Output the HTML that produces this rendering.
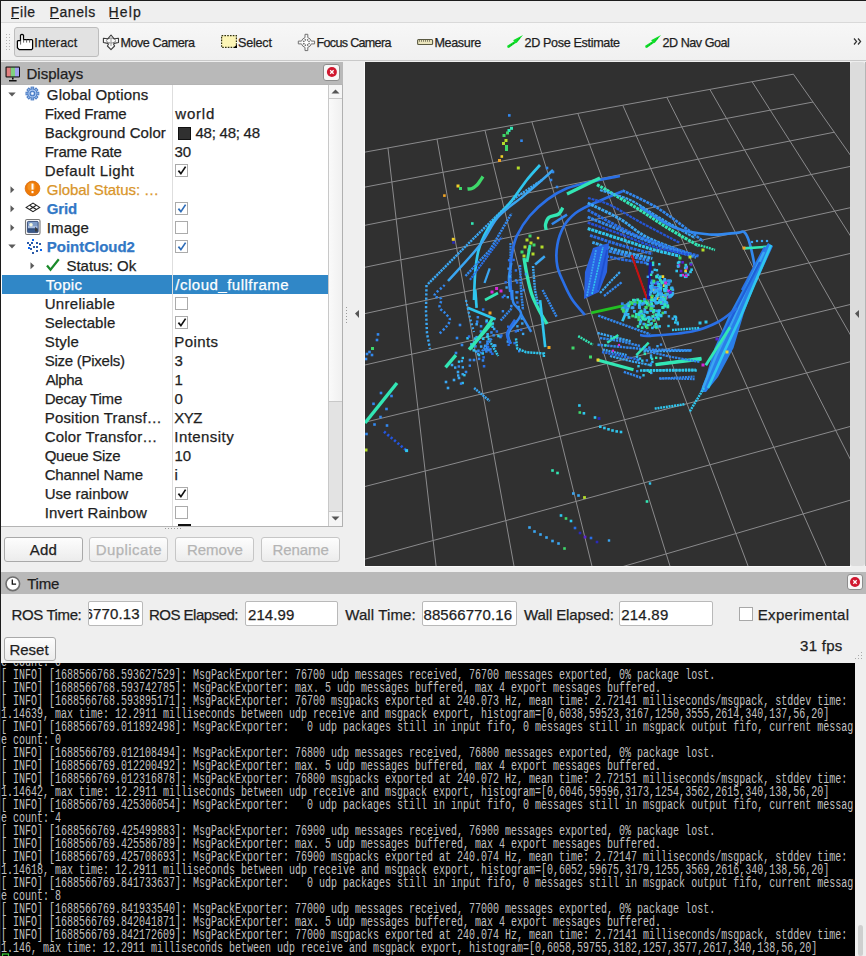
<!DOCTYPE html>
<html><head><meta charset="utf-8"><style>
html,body{margin:0;padding:0;}
body{width:866px;height:956px;position:relative;overflow:hidden;background:#efefef;font-family:"Liberation Sans",sans-serif;}
</style></head><body>
<div style="position:absolute;left:0px;top:0px;width:866px;height:1px;background:#1c1c1c;"></div>
<div style="position:absolute;left:0px;top:0px;width:1px;height:956px;background:#1c1c1c;"></div>
<div style="position:absolute;left:1px;top:1px;width:865px;height:21px;background:#efefef;"></div>
<div style="position:absolute;left:1px;top:22px;width:865px;height:1px;background:#d9d9d9;"></div>
<div style="position:absolute;left:10.80px;top:4.95px;font-size:14px;line-height:14px;color:#1e1e1e;white-space:pre;letter-spacing:0.600px;font-weight:normal;-webkit-text-stroke:0.25px #1e1e1e;">File</div>
<div style="position:absolute;left:11.3px;top:17.6px;width:7.4px;height:1.6px;background:#111;"></div>
<div style="position:absolute;left:49.60px;top:4.95px;font-size:14px;line-height:14px;color:#1e1e1e;white-space:pre;letter-spacing:0.560px;font-weight:normal;-webkit-text-stroke:0.25px #1e1e1e;">Panels</div>
<div style="position:absolute;left:50.2px;top:17.6px;width:8.7px;height:1.6px;background:#111;"></div>
<div style="position:absolute;left:108.50px;top:4.95px;font-size:14px;line-height:14px;color:#1e1e1e;white-space:pre;letter-spacing:1.167px;font-weight:normal;-webkit-text-stroke:0.25px #1e1e1e;">Help</div>
<div style="position:absolute;left:109.5px;top:17.6px;width:9.2px;height:1.6px;background:#111;"></div>
<div style="position:absolute;left:1px;top:23px;width:865px;height:37px;background:linear-gradient(#f7f7f7,#f0f0f0);"></div>
<div style="position:absolute;left:1px;top:60px;width:865px;height:1px;background:#c9c9c9;"></div>
<div style="position:absolute;left:6px;top:34px;width:1px;height:1px;background:#b5b5b5;"></div>
<div style="position:absolute;left:6px;top:37px;width:1px;height:1px;background:#b5b5b5;"></div>
<div style="position:absolute;left:6px;top:40px;width:1px;height:1px;background:#b5b5b5;"></div>
<div style="position:absolute;left:6px;top:43px;width:1px;height:1px;background:#b5b5b5;"></div>
<div style="position:absolute;left:6px;top:46px;width:1px;height:1px;background:#b5b5b5;"></div>
<div style="position:absolute;left:6px;top:49px;width:1px;height:1px;background:#b5b5b5;"></div>
<div style="position:absolute;left:9px;top:34px;width:1px;height:1px;background:#b5b5b5;"></div>
<div style="position:absolute;left:9px;top:37px;width:1px;height:1px;background:#b5b5b5;"></div>
<div style="position:absolute;left:9px;top:40px;width:1px;height:1px;background:#b5b5b5;"></div>
<div style="position:absolute;left:9px;top:43px;width:1px;height:1px;background:#b5b5b5;"></div>
<div style="position:absolute;left:9px;top:46px;width:1px;height:1px;background:#b5b5b5;"></div>
<div style="position:absolute;left:9px;top:49px;width:1px;height:1px;background:#b5b5b5;"></div>
<div style="position:absolute;left:14px;top:27px;width:83px;height:28px;background:#e2e2e2;border:1px solid #bdbdbd;border-radius:3px"></div>
<div style="position:absolute;left:34.30px;top:36.73px;font-size:12.6px;line-height:12.6px;color:#1e1e1e;white-space:pre;letter-spacing:0.129px;font-weight:normal;-webkit-text-stroke:0.25px #1e1e1e;">Interact</div>
<div style="position:absolute;left:120.40px;top:36.73px;font-size:12.6px;line-height:12.6px;color:#1e1e1e;white-space:pre;letter-spacing:-0.440px;font-weight:normal;-webkit-text-stroke:0.25px #1e1e1e;">Move Camera</div>
<div style="position:absolute;left:238.00px;top:36.73px;font-size:12.6px;line-height:12.6px;color:#1e1e1e;white-space:pre;letter-spacing:-0.220px;font-weight:normal;-webkit-text-stroke:0.25px #1e1e1e;">Select</div>
<div style="position:absolute;left:316.60px;top:36.73px;font-size:12.6px;line-height:12.6px;color:#1e1e1e;white-space:pre;letter-spacing:-0.709px;font-weight:normal;-webkit-text-stroke:0.25px #1e1e1e;">Focus Camera</div>
<div style="position:absolute;left:434.50px;top:36.73px;font-size:12.6px;line-height:12.6px;color:#1e1e1e;white-space:pre;letter-spacing:-0.383px;font-weight:normal;-webkit-text-stroke:0.25px #1e1e1e;">Measure</div>
<div style="position:absolute;left:524.50px;top:36.73px;font-size:12.6px;line-height:12.6px;color:#1e1e1e;white-space:pre;letter-spacing:-0.347px;font-weight:normal;-webkit-text-stroke:0.25px #1e1e1e;">2D Pose Estimate</div>
<div style="position:absolute;left:662.50px;top:36.73px;font-size:12.6px;line-height:12.6px;color:#1e1e1e;white-space:pre;letter-spacing:-0.480px;font-weight:normal;-webkit-text-stroke:0.25px #1e1e1e;">2D Nav Goal</div>
<svg style="position:absolute;left:14px;top:30px" width="24" height="24"><path d="M6.5 10.5V5.2Q8 3.6 9.5 5.2V9.5H17.8Q18.6 9.8 18.6 10.6V18.6L17.6 19.6H5.2L3.4 17.8V11.2L4.2 10.5Z" fill="#fff" stroke="#000" stroke-width="1.25" stroke-linejoin="round"/><path d="M6.6 10.6V14.6M9.6 9.6V12.6M12.6 9.6V12.6M15.6 9.6V12.6" stroke="#555" stroke-width="0.9"/></svg>
<svg style="position:absolute;left:100px;top:30px" width="24" height="24"><path d="M11 5L14.2 8.8L18.5 8.3V12.5L14.2 13.4L13.6 14.2L14.6 16L11 19.6L7.4 16L8.4 14.2L7.8 13.4L3.4 12.5V8.3L7.8 8.8Z" fill="#fafafa" stroke="#3c3c3c" stroke-width="1.1" stroke-linejoin="round"/><ellipse cx="11" cy="10.6" rx="4.6" ry="2.4" fill="none" stroke="#333" stroke-width="1" stroke-dasharray="1.2 0.8"/><path d="M11 7.5V16" stroke="#aaa" stroke-width="1.2"/></svg>
<svg style="position:absolute;left:218px;top:30px" width="24" height="24"><rect x="3.6" y="5.6" width="14.8" height="11.8" fill="#fcf5b6" stroke="#303010" stroke-width="1.2" stroke-dasharray="1.6 1.2"/><path d="M15.5 18H19V14.2Z" fill="#000"/></svg>
<svg style="position:absolute;left:295px;top:30px" width="24" height="24"><path d="M10 4.3H12.8V7.6A5.2 5.2 0 0 1 16.3 11.1H19.6V13.9H16.3A5.2 5.2 0 0 1 12.8 17.4V20.6H10V17.4A5.2 5.2 0 0 1 6.5 13.9H3.3V11.1H6.5A5.2 5.2 0 0 1 10 7.6Z" fill="#f8f8f8" stroke="#707070" stroke-width="1"/><circle cx="11.4" cy="12.5" r="2.8" fill="none" stroke="#666" stroke-width="1.4" stroke-dasharray="1.5 0.7"/><path d="M11.4 8V17M7 12.5H16" stroke="#fff" stroke-width="0.8"/></svg>
<svg style="position:absolute;left:412px;top:30px" width="24" height="24"><rect x="5.6" y="9.5" width="15" height="5" rx="1" fill="#ebe5bd" stroke="#5b5a42" stroke-width="1.1"/><path d="M7.5 10V11.8M9.5 10V11.8M11.5 10V11.8M13.5 10V11.8M15.5 10V11.8M17.5 10V11.8" stroke="#6a6850" stroke-width="0.8"/></svg>
<svg style="position:absolute;left:503px;top:30px" width="24" height="24"><path d="M20 5L13.9 12.8L12.4 13.2L5.8 17.9L4.4 17.6L4.2 15.8L11.3 11.2L10 10.3Z" fill="#10e02a"/><path d="M17 8.2L13.6 11.2M10.8 13.2L6 16.6" stroke="#0a8a1a" stroke-width="0.9" stroke-dasharray="1 1.2"/></svg>
<svg style="position:absolute;left:641px;top:30px" width="24" height="24"><path d="M20 5L13.9 12.8L12.4 13.2L5.8 17.9L4.4 17.6L4.2 15.8L11.3 11.2L10 10.3Z" fill="#10e02a"/><path d="M17 8.2L13.6 11.2M10.8 13.2L6 16.6" stroke="#0a8a1a" stroke-width="0.9" stroke-dasharray="1 1.2"/></svg>
<svg style="position:absolute;left:852px;top:36px" width="12" height="12"><path d="M2 2.5L4.6 5.5L2 8.5M6 2.5L8.6 5.5L6 8.5" fill="none" stroke="#333" stroke-width="1.2"/></svg>
<div style="position:absolute;left:1px;top:62px;width:342px;height:22px;background:#b9b9b9;"></div>
<svg style="position:absolute;left:4px;top:64px" width="20" height="20"><rect x="1.5" y="2.5" width="14.5" height="11" rx="1" fill="#111"/><rect x="2.6" y="3.6" width="4.2" height="8.8" fill="#e08080"/><rect x="6.8" y="3.6" width="4.2" height="8.8" fill="#80d080"/><rect x="11" y="3.6" width="4" height="8.8" fill="#a0a0f0"/><path d="M8.8 13.5V15.5M5 16.8H12.6" stroke="#111" stroke-width="1.6"/></svg>
<div style="position:absolute;left:26.50px;top:66.00px;font-size:15px;line-height:15px;color:#1e1e1e;white-space:pre;letter-spacing:0.014px;font-weight:normal;-webkit-text-stroke:0.25px #1e1e1e;">Displays</div>
<div style="position:absolute;left:323px;top:64px;width:15px;height:15px;background:#f7f7f7;border:1px solid #8d8d8d;border-radius:3px"></div>
<svg style="position:absolute;left:323px;top:64px" width="17" height="17"><circle cx="8.9" cy="8" r="5" fill="#d0172f"/><path d="M7.2 6.3l3.4 3.4M10.6 6.3l-3.4 3.4" stroke="#fff" stroke-width="1.3"/></svg>
<div style="position:absolute;left:1px;top:84px;width:342px;height:443px;background:#fff;border-top:1px solid #b4b4b4;border-bottom:1px solid #b4b4b4;box-sizing:border-box"></div>
<div style="position:absolute;left:2px;top:275px;width:326px;height:19px;background:#3087c7;"></div>
<div style="position:absolute;left:172px;top:85px;width:1px;height:441px;background:#dedede;"></div>
<div style="position:absolute;left:46.80px;top:86.90px;font-size:15px;line-height:15px;color:#1e1e1e;white-space:pre;letter-spacing:0.169px;font-weight:normal;-webkit-text-stroke:0.25px #1e1e1e;">Global Options</div>
<div style="position:absolute;left:44.70px;top:105.90px;font-size:15px;line-height:15px;color:#1e1e1e;white-space:pre;letter-spacing:-0.220px;font-weight:normal;-webkit-text-stroke:0.25px #1e1e1e;">Fixed Frame</div>
<div style="position:absolute;left:175.30px;top:105.90px;font-size:15px;line-height:15px;color:#1e1e1e;white-space:pre;letter-spacing:0.800px;font-weight:normal;-webkit-text-stroke:0.25px #1e1e1e;">world</div>
<div style="position:absolute;left:44.70px;top:124.90px;font-size:15px;line-height:15px;color:#1e1e1e;white-space:pre;letter-spacing:0.073px;font-weight:normal;-webkit-text-stroke:0.25px #1e1e1e;">Background Color</div>
<div style="position:absolute;left:178px;top:127px;width:11px;height:11px;background:#303030;border:1px solid #111"></div>
<div style="position:absolute;left:195.50px;top:124.90px;font-size:15px;line-height:15px;color:#1e1e1e;white-space:pre;letter-spacing:-0.244px;font-weight:normal;-webkit-text-stroke:0.25px #1e1e1e;">48; 48; 48</div>
<div style="position:absolute;left:44.70px;top:143.90px;font-size:15px;line-height:15px;color:#1e1e1e;white-space:pre;letter-spacing:-0.233px;font-weight:normal;-webkit-text-stroke:0.25px #1e1e1e;">Frame Rate</div>
<div style="position:absolute;left:174.50px;top:143.90px;font-size:15px;line-height:15px;color:#1e1e1e;white-space:pre;letter-spacing:0.000px;font-weight:normal;-webkit-text-stroke:0.25px #1e1e1e;">30</div>
<div style="position:absolute;left:44.70px;top:162.90px;font-size:15px;line-height:15px;color:#1e1e1e;white-space:pre;letter-spacing:0.425px;font-weight:normal;-webkit-text-stroke:0.25px #1e1e1e;">Default Light</div>
<div style="position:absolute;left:175px;top:164px;width:11px;height:11px;background:#fff;border:1px solid #ababab"></div>
<svg style="position:absolute;left:175px;top:163px" width="14" height="14"><path d="M3.4 7.6L5.9 10.6L10.6 3.6" fill="none" stroke="#111" stroke-width="1.7"/></svg>
<div style="position:absolute;left:46.80px;top:181.90px;font-size:15px;line-height:15px;color:#d9952a;white-space:pre;letter-spacing:-0.073px;font-weight:normal;-webkit-text-stroke:0.25px #d9952a;">Global Status: …</div>
<div style="position:absolute;left:46.80px;top:200.90px;font-size:15px;line-height:15px;color:#3278c6;white-space:pre;letter-spacing:-0.133px;font-weight:bold;-webkit-text-stroke:0.25px #3278c6;">Grid</div>
<div style="position:absolute;left:175px;top:202px;width:11px;height:11px;background:#fff;border:1px solid #ababab"></div>
<svg style="position:absolute;left:175px;top:201px" width="14" height="14"><path d="M3.4 7.6L5.9 10.6L10.6 3.6" fill="none" stroke="#2f6db8" stroke-width="1.7"/></svg>
<div style="position:absolute;left:46.80px;top:219.90px;font-size:15px;line-height:15px;color:#1e1e1e;white-space:pre;letter-spacing:0.100px;font-weight:normal;-webkit-text-stroke:0.25px #1e1e1e;">Image</div>
<div style="position:absolute;left:175px;top:221px;width:11px;height:11px;background:#fff;border:1px solid #ababab"></div>
<div style="position:absolute;left:46.80px;top:238.90px;font-size:15px;line-height:15px;color:#3278c6;white-space:pre;letter-spacing:-0.020px;font-weight:bold;-webkit-text-stroke:0.25px #3278c6;">PointCloud2</div>
<div style="position:absolute;left:175px;top:240px;width:11px;height:11px;background:#fff;border:1px solid #ababab"></div>
<svg style="position:absolute;left:175px;top:239px" width="14" height="14"><path d="M3.4 7.6L5.9 10.6L10.6 3.6" fill="none" stroke="#2f6db8" stroke-width="1.7"/></svg>
<div style="position:absolute;left:66.50px;top:257.90px;font-size:15px;line-height:15px;color:#1e1e1e;white-space:pre;letter-spacing:-0.033px;font-weight:normal;-webkit-text-stroke:0.25px #1e1e1e;">Status: Ok</div>
<div style="position:absolute;left:45.80px;top:276.90px;font-size:15px;line-height:15px;color:#ffffff;white-space:pre;letter-spacing:0.275px;font-weight:normal;-webkit-text-stroke:0.25px #ffffff;">Topic</div>
<div style="position:absolute;left:175.30px;top:276.90px;font-size:15px;line-height:15px;color:#fff;white-space:pre;letter-spacing:0.500px;font-weight:normal;-webkit-text-stroke:0.25px #fff;">/cloud_fullframe</div>
<div style="position:absolute;left:44.70px;top:295.90px;font-size:15px;line-height:15px;color:#1e1e1e;white-space:pre;letter-spacing:0.300px;font-weight:normal;-webkit-text-stroke:0.25px #1e1e1e;">Unreliable</div>
<div style="position:absolute;left:175px;top:297px;width:11px;height:11px;background:#fff;border:1px solid #ababab"></div>
<div style="position:absolute;left:44.70px;top:314.90px;font-size:15px;line-height:15px;color:#1e1e1e;white-space:pre;letter-spacing:0.056px;font-weight:normal;-webkit-text-stroke:0.25px #1e1e1e;">Selectable</div>
<div style="position:absolute;left:175px;top:316px;width:11px;height:11px;background:#fff;border:1px solid #ababab"></div>
<svg style="position:absolute;left:175px;top:315px" width="14" height="14"><path d="M3.4 7.6L5.9 10.6L10.6 3.6" fill="none" stroke="#111" stroke-width="1.7"/></svg>
<div style="position:absolute;left:44.70px;top:333.90px;font-size:15px;line-height:15px;color:#1e1e1e;white-space:pre;letter-spacing:0.200px;font-weight:normal;-webkit-text-stroke:0.25px #1e1e1e;">Style</div>
<div style="position:absolute;left:174.30px;top:333.90px;font-size:15px;line-height:15px;color:#1e1e1e;white-space:pre;letter-spacing:0.400px;font-weight:normal;-webkit-text-stroke:0.25px #1e1e1e;">Points</div>
<div style="position:absolute;left:44.70px;top:352.90px;font-size:15px;line-height:15px;color:#1e1e1e;white-space:pre;letter-spacing:-0.258px;font-weight:normal;-webkit-text-stroke:0.25px #1e1e1e;">Size (Pixels)</div>
<div style="position:absolute;left:174.50px;top:352.90px;font-size:15px;line-height:15px;color:#1e1e1e;white-space:pre;letter-spacing:0.000px;font-weight:normal;-webkit-text-stroke:0.25px #1e1e1e;">3</div>
<div style="position:absolute;left:45.70px;top:371.90px;font-size:15px;line-height:15px;color:#1e1e1e;white-space:pre;letter-spacing:-0.350px;font-weight:normal;-webkit-text-stroke:0.25px #1e1e1e;">Alpha</div>
<div style="position:absolute;left:174.50px;top:371.90px;font-size:15px;line-height:15px;color:#1e1e1e;white-space:pre;letter-spacing:0.000px;font-weight:normal;-webkit-text-stroke:0.25px #1e1e1e;">1</div>
<div style="position:absolute;left:44.70px;top:390.90px;font-size:15px;line-height:15px;color:#1e1e1e;white-space:pre;letter-spacing:-0.178px;font-weight:normal;-webkit-text-stroke:0.25px #1e1e1e;">Decay Time</div>
<div style="position:absolute;left:174.50px;top:390.90px;font-size:15px;line-height:15px;color:#1e1e1e;white-space:pre;letter-spacing:0.000px;font-weight:normal;-webkit-text-stroke:0.25px #1e1e1e;">0</div>
<div style="position:absolute;left:44.70px;top:409.90px;font-size:15px;line-height:15px;color:#1e1e1e;white-space:pre;letter-spacing:0.193px;font-weight:normal;-webkit-text-stroke:0.25px #1e1e1e;">Position Transf…</div>
<div style="position:absolute;left:174.30px;top:409.90px;font-size:15px;line-height:15px;color:#1e1e1e;white-space:pre;letter-spacing:-0.500px;font-weight:normal;-webkit-text-stroke:0.25px #1e1e1e;">XYZ</div>
<div style="position:absolute;left:44.70px;top:428.90px;font-size:15px;line-height:15px;color:#1e1e1e;white-space:pre;letter-spacing:0.186px;font-weight:normal;-webkit-text-stroke:0.25px #1e1e1e;">Color Transfor…</div>
<div style="position:absolute;left:174.30px;top:428.90px;font-size:15px;line-height:15px;color:#1e1e1e;white-space:pre;letter-spacing:0.438px;font-weight:normal;-webkit-text-stroke:0.25px #1e1e1e;">Intensity</div>
<div style="position:absolute;left:44.70px;top:447.90px;font-size:15px;line-height:15px;color:#1e1e1e;white-space:pre;letter-spacing:-0.267px;font-weight:normal;-webkit-text-stroke:0.25px #1e1e1e;">Queue Size</div>
<div style="position:absolute;left:174.50px;top:447.90px;font-size:15px;line-height:15px;color:#1e1e1e;white-space:pre;letter-spacing:0.000px;font-weight:normal;-webkit-text-stroke:0.25px #1e1e1e;">10</div>
<div style="position:absolute;left:44.70px;top:466.90px;font-size:15px;line-height:15px;color:#1e1e1e;white-space:pre;letter-spacing:-0.155px;font-weight:normal;-webkit-text-stroke:0.25px #1e1e1e;">Channel Name</div>
<div style="position:absolute;left:174.50px;top:466.90px;font-size:15px;line-height:15px;color:#1e1e1e;white-space:pre;letter-spacing:0.000px;font-weight:normal;-webkit-text-stroke:0.25px #1e1e1e;">i</div>
<div style="position:absolute;left:44.70px;top:485.90px;font-size:15px;line-height:15px;color:#1e1e1e;white-space:pre;letter-spacing:-0.010px;font-weight:normal;-webkit-text-stroke:0.25px #1e1e1e;">Use rainbow</div>
<div style="position:absolute;left:175px;top:487px;width:11px;height:11px;background:#fff;border:1px solid #ababab"></div>
<svg style="position:absolute;left:175px;top:486px" width="14" height="14"><path d="M3.4 7.6L5.9 10.6L10.6 3.6" fill="none" stroke="#111" stroke-width="1.7"/></svg>
<div style="position:absolute;left:44.70px;top:504.90px;font-size:15px;line-height:15px;color:#1e1e1e;white-space:pre;letter-spacing:0.154px;font-weight:normal;-webkit-text-stroke:0.25px #1e1e1e;">Invert Rainbow</div>
<div style="position:absolute;left:175px;top:506px;width:11px;height:11px;background:#fff;border:1px solid #ababab"></div>
<div style="position:absolute;left:178px;top:524px;width:13px;height:2px;background:#111;"></div>
<div style="position:absolute;left:165px;top:528px;width:1px;height:1px;background:#9a9a9a;"></div>
<div style="position:absolute;left:168px;top:528px;width:1px;height:1px;background:#9a9a9a;"></div>
<div style="position:absolute;left:171px;top:528px;width:1px;height:1px;background:#9a9a9a;"></div>
<div style="position:absolute;left:174px;top:528px;width:1px;height:1px;background:#9a9a9a;"></div>
<div style="position:absolute;left:177px;top:528px;width:1px;height:1px;background:#9a9a9a;"></div>
<div style="position:absolute;left:180px;top:528px;width:1px;height:1px;background:#9a9a9a;"></div>
<svg style="position:absolute;left:8px;top:92px" width="10" height="6"><path d="M0.3 0.5H7.7L4 4.6Z" fill="#5a5a5a"/></svg>
<svg style="position:absolute;left:10px;top:185.5px" width="6" height="10"><path d="M0.5 0.3V7.3L4.3 3.8Z" fill="#5a5a5a"/></svg>
<svg style="position:absolute;left:10px;top:205px" width="6" height="10"><path d="M0.5 0.3V7.3L4.3 3.8Z" fill="#5a5a5a"/></svg>
<svg style="position:absolute;left:10px;top:224px" width="6" height="10"><path d="M0.5 0.3V7.3L4.3 3.8Z" fill="#5a5a5a"/></svg>
<svg style="position:absolute;left:8px;top:244px" width="10" height="6"><path d="M0.3 0.5H7.7L4 4.6Z" fill="#5a5a5a"/></svg>
<svg style="position:absolute;left:30px;top:262px" width="6" height="10"><path d="M0.5 0.3V7.3L4.3 3.8Z" fill="#5a5a5a"/></svg>
<svg style="position:absolute;left:25px;top:86px" width="16" height="16"><g transform="translate(7.4,7.5)" fill="#a9c6f0" stroke="#4a7cc4" stroke-width="1"><rect x="-1.3" y="-6.4" width="2.6" height="3" transform="rotate(0)"/><rect x="-1.3" y="-6.4" width="2.6" height="3" transform="rotate(45)"/><rect x="-1.3" y="-6.4" width="2.6" height="3" transform="rotate(90)"/><rect x="-1.3" y="-6.4" width="2.6" height="3" transform="rotate(135)"/><rect x="-1.3" y="-6.4" width="2.6" height="3" transform="rotate(180)"/><rect x="-1.3" y="-6.4" width="2.6" height="3" transform="rotate(225)"/><rect x="-1.3" y="-6.4" width="2.6" height="3" transform="rotate(270)"/><rect x="-1.3" y="-6.4" width="2.6" height="3" transform="rotate(315)"/><circle r="4.6"/></g><circle cx="7.4" cy="7.5" r="2.3" fill="none" stroke="#4a7cc4" stroke-width="1.1"/><circle cx="7.4" cy="7.5" r="1" fill="#fff"/></svg>
<svg style="position:absolute;left:24px;top:180px" width="17" height="17"><circle cx="8.5" cy="8.5" r="7.4" fill="#ee7a08" stroke="#d06000" stroke-width="0.6"/><circle cx="7.4" cy="6.8" r="4" fill="#f8a030" opacity="0.6"/><rect x="7.5" y="3.6" width="2" height="6" fill="#fff"/><rect x="7.5" y="11" width="2" height="2.2" fill="#fff"/></svg>
<svg style="position:absolute;left:24px;top:201px" width="18" height="14"><g fill="none" stroke="#222" stroke-width="1.1"><path d="M2.2 6.4L9 2.1L15.7 6.4L9 10.6Z"/><path d="M5.6 4.25L12.35 8.5M12.35 4.25L5.6 8.5"/></g></svg>
<svg style="position:absolute;left:24px;top:218px" width="18" height="18"><rect x="1.5" y="1.5" width="14.5" height="15" rx="1.5" fill="#fff" stroke="#777" stroke-width="1.1"/><rect x="3.4" y="3.4" width="10.8" height="11.2" rx="1" fill="#3a5a8a" stroke="#2a4070" stroke-width="0.8"/><rect x="4" y="4" width="9.6" height="3.5" fill="#7f9cc8"/><rect x="4" y="7.5" width="9.6" height="3" fill="#a8bde0"/><rect x="4" y="10.5" width="9.6" height="1" fill="#2a4470"/><circle cx="7" cy="6.8" r="1.8" fill="#f4f8e0"/><path d="M11.2 8.5L13.5 11.5V13.5H11Z" fill="#3a3a3a"/></svg>
<div style="position:absolute;left:31.5px;top:238.9px;width:2px;height:2px;background:#0a66f0;"></div>
<div style="position:absolute;left:26.5px;top:242px;width:2px;height:2px;background:#2a5aa8;"></div>
<div style="position:absolute;left:30.5px;top:242px;width:2px;height:2px;background:#2a5aa8;"></div>
<div style="position:absolute;left:35.5px;top:242px;width:2px;height:2px;background:#2a5aa8;"></div>
<div style="position:absolute;left:38.5px;top:243px;width:2px;height:2px;background:#2a5aa8;"></div>
<div style="position:absolute;left:28.5px;top:244px;width:2px;height:2px;background:#2a5aa8;"></div>
<div style="position:absolute;left:32.5px;top:246px;width:2px;height:2px;background:#2a5aa8;"></div>
<div style="position:absolute;left:35.5px;top:246px;width:2px;height:2px;background:#2a5aa8;"></div>
<div style="position:absolute;left:27.5px;top:247px;width:2px;height:2px;background:#0a66f0;"></div>
<div style="position:absolute;left:29.5px;top:248px;width:2px;height:2px;background:#2a5aa8;"></div>
<div style="position:absolute;left:35.5px;top:250px;width:2px;height:2px;background:#2a5aa8;"></div>
<div style="position:absolute;left:39.5px;top:249px;width:2px;height:2px;background:#0a66f0;"></div>
<div style="position:absolute;left:31.5px;top:252px;width:2px;height:2px;background:#2a5aa8;"></div>
<svg style="position:absolute;left:44px;top:256px" width="18" height="18"><path d="M3 9.5L6.5 13.8L14.8 3.2" fill="none" stroke="#1a8a2a" stroke-width="2.2"/></svg>
<div style="position:absolute;left:328px;top:85px;width:1px;height:441px;background:#c8c8c8;"></div>
<div style="position:absolute;left:329px;top:85px;width:14px;height:441px;background:#e3e3e3;"></div>
<div style="position:absolute;left:329px;top:98px;width:13px;height:304px;background:linear-gradient(90deg,#fafafa,#f0f0f0);border-top:1px solid #c8c8c8;border-bottom:1px solid #c8c8c8;box-sizing:border-box"></div>
<div style="position:absolute;left:329px;top:85px;width:13px;height:13px;background:#f5f5f5;"></div>
<svg style="position:absolute;left:329px;top:85px" width="13" height="13"><path d="M2.5 8.5h8l-4-4z" fill="#555"/></svg>
<div style="position:absolute;left:329px;top:511px;width:13px;height:15px;background:#f5f5f5;border-top:1px solid #c8c8c8;box-sizing:border-box"></div>
<svg style="position:absolute;left:329px;top:512px" width="13" height="13"><path d="M2.5 4.5h8l-4 4z" fill="#555"/></svg>
<div style="position:absolute;left:342px;top:85px;width:1px;height:441px;background:#b0b0b0;"></div>
<div style="position:absolute;left:4px;top:537px;width:77px;height:23px;background:linear-gradient(#fdfdfd,#ececec);border:1px solid #a9a9a9;border-radius:3px"></div>
<div style="position:absolute;left:29.70px;top:542.00px;font-size:15px;line-height:15px;color:#1e1e1e;white-space:pre;letter-spacing:0.200px;font-weight:normal;-webkit-text-stroke:0.25px #1e1e1e;">Add</div>
<div style="position:absolute;left:89px;top:537px;width:77px;height:23px;background:linear-gradient(#fdfdfd,#ececec);border:1px solid #c6c6c6;border-radius:3px"></div>
<div style="position:absolute;left:95.70px;top:542.00px;font-size:15px;line-height:15px;color:#b4b4b4;white-space:pre;letter-spacing:0.425px;font-weight:normal;-webkit-text-stroke:0.25px #b4b4b4;">Duplicate</div>
<div style="position:absolute;left:175px;top:537px;width:77px;height:23px;background:linear-gradient(#fdfdfd,#ececec);border:1px solid #c6c6c6;border-radius:3px"></div>
<div style="position:absolute;left:186.90px;top:542.00px;font-size:15px;line-height:15px;color:#b4b4b4;white-space:pre;letter-spacing:0.000px;font-weight:normal;-webkit-text-stroke:0.25px #b4b4b4;">Remove</div>
<div style="position:absolute;left:261px;top:537px;width:77px;height:23px;background:linear-gradient(#fdfdfd,#ececec);border:1px solid #c6c6c6;border-radius:3px"></div>
<div style="position:absolute;left:272.50px;top:542.00px;font-size:15px;line-height:15px;color:#b4b4b4;white-space:pre;letter-spacing:-0.060px;font-weight:normal;-webkit-text-stroke:0.25px #b4b4b4;">Rename</div>
<div style="position:absolute;left:346px;top:307px;width:1px;height:1px;background:#999;"></div>
<div style="position:absolute;left:346px;top:310px;width:1px;height:1px;background:#999;"></div>
<div style="position:absolute;left:346px;top:313px;width:1px;height:1px;background:#999;"></div>
<div style="position:absolute;left:346px;top:316px;width:1px;height:1px;background:#999;"></div>
<div style="position:absolute;left:346px;top:319px;width:1px;height:1px;background:#999;"></div>
<div style="position:absolute;left:346px;top:322px;width:1px;height:1px;background:#999;"></div>
<svg style="position:absolute;left:354px;top:309px" width="7" height="10"><path d="M1 4.5L5 1v8z" fill="#555"/></svg>
<div style="position:absolute;left:364px;top:62px;width:1px;height:505px;background:#fafafa;"></div>
<div style="position:absolute;left:364px;top:566px;width:487px;height:1px;background:#fafafa;"></div>
<svg style="position:absolute;left:365px;top:62px" width="485" height="504" viewBox="365 62 485 504">
<rect x="365" y="62" width="485" height="504" fill="#303030"/>
<g stroke="#8a8a8c" stroke-width="1" fill="none">
<line x1="337.79" y1="157.08" x2="366.77" y2="736.44"/>
<line x1="337.79" y1="157.08" x2="793.42" y2="74.18"/>
<line x1="387.95" y1="147.95" x2="452.61" y2="709.53"/>
<line x1="339.53" y1="191.92" x2="813.02" y2="102.04"/>
<line x1="436.99" y1="139.03" x2="535.19" y2="683.65"/>
<line x1="341.44" y1="229.98" x2="834.25" y2="132.21"/>
<line x1="484.96" y1="130.30" x2="614.70" y2="658.73"/>
<line x1="343.52" y1="271.75" x2="857.29" y2="164.97"/>
<line x1="531.89" y1="121.76" x2="691.32" y2="634.72"/>
<line x1="345.83" y1="317.79" x2="882.41" y2="200.68"/>
<line x1="577.82" y1="113.40" x2="765.18" y2="611.57"/>
<line x1="348.38" y1="368.78" x2="909.90" y2="239.75"/>
<line x1="622.77" y1="105.23" x2="836.45" y2="589.23"/>
<line x1="351.22" y1="425.58" x2="940.10" y2="282.68"/>
<line x1="666.78" y1="97.22" x2="905.25" y2="567.67"/>
<line x1="354.40" y1="489.23" x2="973.44" y2="330.07"/>
<line x1="709.87" y1="89.38" x2="971.71" y2="546.84"/>
<line x1="358.00" y1="561.05" x2="1010.43" y2="382.65"/>
<line x1="752.07" y1="81.70" x2="1035.95" y2="526.71"/>
<line x1="362.08" y1="642.73" x2="1051.71" y2="441.33"/>
<line x1="793.42" y1="74.18" x2="1098.08" y2="507.24"/>
<line x1="366.77" y1="736.44" x2="1098.08" y2="507.24"/>
</g>
<g fill="none" stroke-linecap="butt"><rect x="508.0" y="114.1" width="2.6" height="2.6" fill="#3288ee"/>
<rect x="510.0" y="126.8" width="3" height="3" fill="#32e6b4"/>
<rect x="507.5" y="129.0" width="3" height="3" fill="#32e6b4"/>
<rect x="506.0" y="131.5" width="3" height="3" fill="#3ed86a"/>
<rect x="502.5" y="134.0" width="3" height="3" fill="#3ed86a"/>
<rect x="504.5" y="139.0" width="3" height="3" fill="#b4dc2a"/>
<rect x="502.0" y="142.0" width="3" height="3" fill="#b4dc2a"/>
<rect x="505.0" y="145.0" width="3" height="3" fill="#3ed86a"/>
<rect x="505.0" y="148.0" width="3" height="3" fill="#3ed86a"/>
<rect x="520.2" y="139.4" width="2.6" height="2.6" fill="#3288ee"/>
<rect x="500.5" y="155.2" width="2.6" height="2.6" fill="#f0d228"/>
<rect x="498.0" y="159.0" width="3" height="3" fill="#f0a424"/>
<rect x="516.8" y="166.5" width="3" height="3" fill="#b4dc2a"/>
<path d="M483.0 176.5 C482.5 177.2 481.0 179.6 480.0 181.0 C479.0 182.4 478.3 183.8 477.0 185.0 C475.7 186.2 473.6 187.8 472.0 188.5 C470.4 189.2 468.2 188.9 467.5 189.0" stroke="#3ed86a" stroke-width="3.3600000000000003"/>
<rect x="456.5" y="184.5" width="3" height="3" fill="#f0d228"/>
<rect x="459.0" y="187.0" width="3" height="3" fill="#3ed86a"/>
<rect x="443.1" y="194.3" width="2.6" height="2.6" fill="#f0a424"/>
<rect x="471.0" y="222.2" width="2.6" height="2.6" fill="#32e6b4"/>
<rect x="451.8" y="237.8" width="3" height="3" fill="#f0d228"/>
<rect x="452.2" y="241.2" width="2.6" height="2.6" fill="#2a2ab8"/>
<path d="M428.0 284.0 L470.0 242.0 L515.0 198.0 L542.0 180.0" stroke="#3aa6f2" stroke-width="2.4640000000000004" stroke-dasharray="2.2 0.8"/>
<path d="M474.0 300.0 C474.2 294.8 474.6 277.6 475.5 268.7 C476.4 259.8 477.1 253.9 479.7 246.5 C482.2 239.1 485.5 231.9 490.8 224.3 C496.1 216.7 505.6 208.2 511.6 200.8 C517.6 193.4 522.1 186.0 526.8 180.0 C531.5 174.0 537.8 167.5 540.0 165.0" stroke="#2fc6ee" stroke-width="2.688"/>
<path d="M448.0 281.0 C453.3 275.0 471.7 255.6 480.0 245.0 C488.3 234.4 490.6 225.5 497.7 217.4 C504.8 209.3 515.3 202.8 522.7 196.6 C530.1 190.4 537.0 184.4 542.0 180.0 C547.0 175.6 551.2 171.7 553.0 170.0" stroke="#3aa6f2" stroke-width="2.4640000000000004"/>
<path d="M465.5 276.0 L490.0 250.0 L511.6 213.3" stroke="#3288ee" stroke-width="2.4640000000000004" stroke-dasharray="2.2 0.8"/>
<path d="M470.0 279.8 L501.9 236.8" stroke="#2a6fe6" stroke-width="2.24" stroke-dasharray="2.0 0.8"/>
<path d="M484.5 283.0 L489.7 268.3" stroke="#3aa6f2" stroke-width="2.24"/>
<path d="M510.5 243.0 L510.5 285.0" stroke="#3288ee" stroke-width="2.24" stroke-dasharray="2.0 0.8"/>
<rect x="545.7" y="166.7" width="2.6" height="2.6" fill="#3288ee"/>
<rect x="549.7" y="178.7" width="2.6" height="2.6" fill="#3288ee"/>
<rect x="555.7" y="185.7" width="2.6" height="2.6" fill="#3288ee"/>
<rect x="551.7" y="170.7" width="2.6" height="2.6" fill="#3288ee"/>
<path d="M620.0 176.0 C615.0 177.0 598.8 179.9 590.0 182.0 C581.2 184.1 574.1 185.4 567.0 188.3 C559.9 191.2 553.8 194.8 547.6 199.4 C541.4 204.0 534.7 210.0 529.6 216.0 C524.5 222.0 520.0 229.4 517.1 235.4 C514.2 241.4 513.5 245.4 512.3 252.0 C511.1 258.6 510.1 267.0 510.0 275.0 C509.9 283.0 511.7 295.8 512.0 300.0" stroke="#2a6fe6" stroke-width="2.688"/>
<path d="M622.4 191.2 C617.0 193.5 597.9 201.3 590.0 205.0 C582.1 208.7 579.6 209.9 575.3 213.3 C571.0 216.8 567.2 220.4 564.2 225.7 C561.2 231.0 558.4 238.4 557.3 245.1 C556.1 251.8 556.1 259.5 557.3 266.0 C558.4 272.5 561.7 278.3 564.2 284.0 C566.7 289.7 569.0 294.8 572.5 300.0 C576.0 305.2 582.9 312.5 585.0 315.0" stroke="#2a6fe6" stroke-width="2.688"/>
<path d="M562.8 207.7 C562.1 208.8 561.0 212.4 558.7 214.0 C556.4 215.6 551.2 215.7 549.0 217.4 C546.8 219.1 546.0 222.2 545.5 224.3 C545.0 226.4 546.1 229.0 546.2 229.9" stroke="#32e6b4" stroke-width="3.3600000000000003"/>
<path d="M567.0 214.6 L551.8 224.3" stroke="#3288ee" stroke-width="2.5088000000000004"/>
<rect x="525.5" y="238.5" width="3" height="3" fill="#b4dc2a"/>
<rect x="529.5" y="241.5" width="3" height="3" fill="#b4dc2a"/>
<rect x="523.5" y="245.5" width="3" height="3" fill="#b4dc2a"/>
<rect x="527.5" y="248.5" width="3" height="3" fill="#b4dc2a"/>
<rect x="531.5" y="252.5" width="3" height="3" fill="#b4dc2a"/>
<rect x="522.5" y="254.5" width="3" height="3" fill="#b4dc2a"/>
<rect x="528.5" y="234.5" width="3" height="3" fill="#3ed86a"/>
<rect x="532.5" y="243.5" width="3" height="3" fill="#3ed86a"/>
<rect x="520.5" y="250.5" width="3" height="3" fill="#3ed86a"/>
<rect x="540.5" y="245.5" width="3" height="3" fill="#b4dc2a"/>
<rect x="536.8" y="236.8" width="2.5" height="2.5" fill="#f0d228"/>
<path d="M524.0 258.0 C524.5 260.8 525.7 268.8 527.0 275.0 C528.3 281.2 529.8 288.8 532.0 295.0 C534.2 301.2 537.5 307.2 540.0 312.0 C542.5 316.8 545.8 322.0 547.0 324.0" stroke="#32e6b4" stroke-width="3.3600000000000003"/>
<path d="M520.0 265.0 L521.0 290.0 L523.0 310.0" stroke="#3288ee" stroke-width="2.4640000000000004" stroke-dasharray="2.0 0.8"/>
<path d="M533.0 266.0 L535.0 290.0 L538.0 305.0" stroke="#3aa6f2" stroke-width="2.4640000000000004" stroke-dasharray="2.0 0.8"/>
<path d="M511.6 263.0 C511.1 265.3 509.1 272.2 508.8 277.0 C508.5 281.8 509.8 289.5 510.0 292.0" stroke="#3288ee" stroke-width="2.24"/>
<path d="M544.8 256.2 L535.1 264.5" stroke="#3aa6f2" stroke-width="2.4640000000000004"/>
<path d="M567.0 194.0 L590.0 182.8 L600.0 178.0" stroke="#32e6b4" stroke-width="3.3600000000000003"/>
<path d="M597.0 184.6 C603.5 188.4 624.3 200.4 636.2 207.7 C648.1 215.0 658.1 222.2 668.5 228.5 C678.9 234.8 693.6 242.9 698.6 245.8" stroke="#32e6b4" stroke-width="3.136" stroke-dasharray="3.0 0.8"/>
<path d="M622.4 190.4 C628.2 193.3 645.9 201.0 657.0 207.7 C668.1 214.4 681.6 225.2 689.3 230.8 C697.0 236.4 700.9 239.5 703.2 241.2" stroke="#3288ee" stroke-width="2.688" stroke-dasharray="3.0 0.8"/>
<path d="M587.7 203.0 C593.1 205.7 610.0 213.2 620.0 219.0 C630.0 224.8 636.2 231.9 647.8 237.7 C659.3 243.5 682.4 251.2 689.3 253.9" stroke="#3aa6f2" stroke-width="2.9120000000000004" stroke-dasharray="3.0 0.8"/>
<path d="M587.7 210.0 C596.4 214.5 621.5 229.3 640.0 237.0 C658.5 244.7 688.8 253.0 698.6 256.2" stroke="#2a6fe6" stroke-width="2.9120000000000004" stroke-dasharray="3.0 0.8"/>
<path d="M587.7 217.0 C593.1 219.2 608.5 225.4 620.0 230.0 C631.5 234.6 644.3 240.1 657.0 244.7 C669.7 249.3 689.8 255.3 696.3 257.4" stroke="#3288ee" stroke-width="2.9120000000000004" stroke-dasharray="3.0 0.8"/>
<path d="M587.7 228.5 C593.1 230.2 609.2 235.5 620.0 239.0 C630.8 242.5 642.4 246.4 652.4 249.3 C662.4 252.2 675.4 255.0 680.0 256.2" stroke="#2fc6ee" stroke-width="3.136" stroke-dasharray="3.0 0.8"/>
<path d="M590.0 235.4 C595.0 237.0 609.6 241.9 620.0 245.0 C630.4 248.1 647.0 252.4 652.4 253.9" stroke="#2a6fe6" stroke-width="2.9120000000000004" stroke-dasharray="3.0 0.8"/>
<path d="M592.3 242.4 C596.9 243.8 610.0 248.3 620.0 251.0 C630.0 253.7 647.0 257.2 652.4 258.5" stroke="#3aa6f2" stroke-width="2.9120000000000004" stroke-dasharray="3.0 0.8"/>
<path d="M601.6 249.3 C605.5 250.2 616.9 253.1 625.0 255.0 C633.1 256.9 645.8 259.8 650.0 260.8" stroke="#3288ee" stroke-width="2.9120000000000004" stroke-dasharray="3.0 0.8"/>
<path d="M606.2 256.2 C609.3 256.8 618.1 258.9 625.0 260.0 C631.9 261.1 644.0 262.6 647.8 263.1" stroke="#2a6fe6" stroke-width="2.688" stroke-dasharray="3.0 0.8"/>
<path d="M587.7 222.5 C593.1 224.4 608.8 229.9 620.0 234.0 C631.2 238.1 643.3 243.5 655.0 247.0 C666.7 250.5 684.2 253.7 690.0 255.0" stroke="#2450d8" stroke-width="2.4640000000000004" stroke-dasharray="3.0 0.8"/>
<path d="M588.0 198.0 C591.7 199.2 601.3 201.0 610.0 205.0 C618.7 209.0 628.3 215.7 640.0 222.0 C651.7 228.3 673.3 239.5 680.0 243.0" stroke="#2456d8" stroke-width="2.24" stroke-dasharray="3.0 0.8"/>
<path d="M600.0 190.0 C605.0 191.7 620.0 195.3 630.0 200.0 C640.0 204.7 649.2 211.7 660.0 218.0 C670.8 224.3 689.2 234.7 695.0 238.0" stroke="#3aa6f2" stroke-width="2.24" stroke-dasharray="3.0 0.8"/>
<path d="M640.0 206.8 C645.8 210.3 663.1 223.0 674.6 227.6 C686.1 232.2 698.9 233.6 709.3 234.5 C719.7 235.4 731.2 233.2 737.0 232.8 C742.8 232.4 742.0 230.5 744.0 231.9 C746.0 233.3 747.4 236.1 749.1 241.4 C750.8 246.8 753.1 257.4 754.3 264.0 C755.4 270.6 755.7 278.4 756.0 281.3" stroke="#3288ee" stroke-width="2.688"/>
<path d="M698.0 245.0 L706.0 247.0 L715.0 250.0" stroke="#32e6b4" stroke-width="2.4640000000000004" stroke-dasharray="2.0 0.8"/>
<rect x="701.5" y="248.5" width="3" height="3" fill="#b4dc2a"/>
<rect x="688.5" y="255.5" width="3" height="3" fill="#b4dc2a"/>
<rect x="678.5" y="256.5" width="3" height="3" fill="#3ed86a"/>
<polygon points="593.0,248.0 609.0,243.0 607.0,272.0 599.0,292.0 584.0,299.0 585.0,272.0" fill="#2a62e2" fill-opacity="1"/>
<path d="M587.0 296.0 L596.0 250.0" stroke="#3aa6f2" stroke-width="1.7920000000000003" stroke-dasharray="2.0 0.8"/>
<path d="M592.0 294.0 L603.0 247.0" stroke="#2fc6ee" stroke-width="1.568" stroke-dasharray="2.0 0.8"/>
<path d="M598.0 290.0 L607.0 250.0" stroke="#1e50d0" stroke-width="1.7920000000000003"/>
<path d="M600.0 293.0 L612.0 280.0 L620.0 272.0" stroke="#3aa6f2" stroke-width="2.24" stroke-dasharray="2.5 0.8"/>
<path d="M604.0 296.0 L622.0 282.0" stroke="#3288ee" stroke-width="2.24" stroke-dasharray="2.5 0.8"/>
<path d="M744.0 248.3 L770.0 246.6" stroke="#32e6b4" stroke-width="2.688"/>
<rect x="750.9" y="240.9" width="2.2" height="2.2" fill="#3aa6f2"/>
<rect x="755.9" y="239.9" width="2.2" height="2.2" fill="#3aa6f2"/>
<rect x="760.9" y="239.9" width="2.2" height="2.2" fill="#3aa6f2"/>
<rect x="765.9" y="239.9" width="2.2" height="2.2" fill="#3aa6f2"/>
<rect x="742.5" y="246.5" width="3" height="3" fill="#f0a424"/>
<path d="M770.0 244.9 L747.4 290.0" stroke="#2fc6ee" stroke-width="2.688"/>
<path d="M765.0 247.0 L742.0 290.0" stroke="#2a6fe6" stroke-width="2.4640000000000004"/>
<polygon points="768.0,243.0 773.0,246.0 762.0,270.0 754.0,287.0 744.0,313.0 733.5,348.0 718.0,377.0 706.0,392.0 700.0,392.0 705.8,377.0 714.5,348.0 730.0,313.0 744.0,287.0 752.0,270.0" fill="#2a7ee8" fill-opacity="1"/>
<path d="M771.0 245.0 L757.0 278.0 L740.0 318.0 L725.0 350.0 L708.0 388.0" stroke="#2fc6ee" stroke-width="2.688"/>
<path d="M764.0 252.0 L748.0 285.0 L732.0 322.0 L716.0 356.0 L703.0 388.0" stroke="#3aa6f2" stroke-width="2.4640000000000004"/>
<path d="M760.0 262.0 L738.0 305.0 L720.0 342.0" stroke="#1f5fd8" stroke-width="2.24"/>
<path d="M730.0 327.2 L705.8 365.3" stroke="#32e6b4" stroke-width="2.9120000000000004"/>
<path d="M704.0 388.0 L689.4 412.0" stroke="#2fc6ee" stroke-width="2.4640000000000004" stroke-dasharray="2.0 0.8"/>
<path d="M654.7 408.6 L685.0 404.2" stroke="#2fc6ee" stroke-width="2.4640000000000004" stroke-dasharray="2.0 0.8"/>
<rect x="725.5" y="350.5" width="3" height="3" fill="#f0d228"/>
<rect x="715.5" y="337.5" width="3" height="3" fill="#5a24d2"/>
<rect x="701.5" y="363.5" width="3" height="3" fill="#d428d8"/>
<path d="M737.0 308.1 C733.8 310.4 725.5 318.1 718.0 322.0 C710.5 325.9 703.3 329.2 692.0 331.5 C680.7 333.8 659.1 335.2 650.4 335.8 C641.7 336.4 641.7 335.1 640.0 335.0" stroke="#2a6fe6" stroke-width="2.688"/>
<rect x="698.5" y="321.5" width="3" height="3" fill="#2fc6ee"/>
<rect x="704.5" y="320.5" width="3" height="3" fill="#2fc6ee"/>
<path d="M672.0 330.0 L700.0 328.0" stroke="#2fc6ee" stroke-width="2.4640000000000004" stroke-dasharray="2.0 0.8"/>
<path d="M643.5 351.4 L691.1 350.5" stroke="#3aa6f2" stroke-width="2.4640000000000004" stroke-dasharray="2.4 0.8"/>
<path d="M655.6 364.4 L701.5 358.3" stroke="#32e6b4" stroke-width="2.9120000000000004"/>
<path d="M640.0 370.5 L697.2 370.5" stroke="#2fc6ee" stroke-width="2.4640000000000004" stroke-dasharray="2.4 0.8"/>
<path d="M659.0 378.3 L695.4 379.1" stroke="#3288ee" stroke-width="2.24" stroke-dasharray="2.0 0.8"/>
<path d="M591.2 312.9 L647.4 300.4" stroke="#22c022" stroke-width="2.688"/>
<path d="M631.7 255.1 L646.9 298.8" stroke="#c81010" stroke-width="2.0160000000000005"/>
<path d="M650.4 262.0 L648.3 299.5" stroke="#1818a0" stroke-width="2.9120000000000004"/>
<path d="M622.4 321.2 L630.7 301.1" stroke="#2fc6ee" stroke-width="2.688"/>
<path d="M598.2 315.6 L650.1 334.3" stroke="#3288ee" stroke-width="2.4640000000000004" stroke-dasharray="2.4 0.8"/>
<path d="M597.5 333.0 L630.7 341.3" stroke="#3aa6f2" stroke-width="2.4640000000000004" stroke-dasharray="2.4 0.8"/>
<path d="M597.5 344.7 L648.7 349.6 L691.7 350.3" stroke="#3288ee" stroke-width="2.4640000000000004" stroke-dasharray="2.4 0.8"/>
<path d="M603.0 349.6 L626.6 355.1" stroke="#3aa6f2" stroke-width="2.4640000000000004" stroke-dasharray="2.0 0.8"/>
<path d="M607.2 342.7 L618.3 335.0" stroke="#32e6b4" stroke-width="2.4640000000000004"/>
<path d="M636.3 355.1 L648.7 342.7" stroke="#32e6b4" stroke-width="2.4640000000000004"/>
<path d="M597.5 360.0 L633.5 369.7" stroke="#32e6b4" stroke-width="3.136"/>
<path d="M623.8 371.8 L641.8 378.0" stroke="#3288ee" stroke-width="2.4640000000000004" stroke-dasharray="2.4 0.8"/>
<path d="M655.7 364.8 L701.4 359.3" stroke="#32e6b4" stroke-width="2.9120000000000004"/>
<path d="M643.2 370.4 L695.8 369.7" stroke="#2fc6ee" stroke-width="2.4640000000000004" stroke-dasharray="2.4 0.8"/>
<path d="M659.8 378.7 L694.5 376.6" stroke="#3288ee" stroke-width="2.24" stroke-dasharray="2.0 0.8"/>
<rect x="596.5" y="358.5" width="3" height="3" fill="#f0d228"/>
<rect x="589.0" y="355.5" width="3" height="3" fill="#3ed86a"/>
<rect x="571.5" y="346.5" width="3" height="3" fill="#3ed86a"/>
<path d="M578.2 336.1 L593.0 344.8" stroke="#32e6b4" stroke-width="2.4640000000000004" stroke-dasharray="2.0 0.8"/>
<path d="M600.0 338.0 L620.0 341.0 L640.0 346.0" stroke="#3288ee" stroke-width="2.4640000000000004" stroke-dasharray="2.4 0.8"/>
<path d="M602.0 352.0 L622.0 356.0 L640.0 360.0" stroke="#2a6fe6" stroke-width="2.4640000000000004" stroke-dasharray="2.4 0.8"/>
<path d="M610.0 356.0 L630.0 361.0 L650.0 365.0" stroke="#3aa6f2" stroke-width="2.24" stroke-dasharray="2.4 0.8"/>
<path d="M650.0 352.0 L672.0 357.0 L700.0 362.0" stroke="#3288ee" stroke-width="2.24" stroke-dasharray="2.4 0.8"/>
<rect x="643.2" y="345.9" width="2.4" height="2.4" fill="#2fc6ee"/>
<rect x="636.7" y="359.0" width="2.4" height="2.4" fill="#3288ee"/>
<rect x="650.0" y="371.7" width="2.4" height="2.4" fill="#3aa6f2"/>
<rect x="635.8" y="355.5" width="2.4" height="2.4" fill="#2fc6ee"/>
<rect x="641.1" y="359.5" width="2.4" height="2.4" fill="#2fc6ee"/>
<rect x="656.3" y="345.0" width="2.4" height="2.4" fill="#3aa6f2"/>
<rect x="651.2" y="360.6" width="2.4" height="2.4" fill="#2fc6ee"/>
<rect x="649.8" y="354.3" width="2.4" height="2.4" fill="#3aa6f2"/>
<rect x="636.0" y="370.0" width="2.4" height="2.4" fill="#3288ee"/>
<rect x="645.7" y="359.2" width="2.4" height="2.4" fill="#3288ee"/>
<rect x="649.4" y="364.0" width="2.4" height="2.4" fill="#2fc6ee"/>
<rect x="649.9" y="362.5" width="2.4" height="2.4" fill="#3288ee"/>
<rect x="637.3" y="365.0" width="2.4" height="2.4" fill="#2fc6ee"/>
<rect x="650.9" y="357.7" width="2.4" height="2.4" fill="#32e6b4"/>
<rect x="655.0" y="356.6" width="2.4" height="2.4" fill="#32e6b4"/>
<rect x="644.2" y="349.2" width="2.4" height="2.4" fill="#3aa6f2"/>
<rect x="653.0" y="349.1" width="2.4" height="2.4" fill="#3288ee"/>
<rect x="648.5" y="370.6" width="2.4" height="2.4" fill="#32e6b4"/>
<rect x="642.3" y="374.1" width="2.4" height="2.4" fill="#2fc6ee"/>
<rect x="648.1" y="346.4" width="2.4" height="2.4" fill="#3288ee"/>
<rect x="638.8" y="357.4" width="2.4" height="2.4" fill="#2fc6ee"/>
<rect x="659.8" y="343.4" width="2.4" height="2.4" fill="#3288ee"/>
<rect x="643.6" y="352.7" width="2.4" height="2.4" fill="#32e6b4"/>
<rect x="649.9" y="356.3" width="2.4" height="2.4" fill="#2fc6ee"/>
<rect x="659.4" y="356.9" width="2.4" height="2.4" fill="#2fc6ee"/>
<rect x="604.5" y="344.3" width="2.2" height="2.2" fill="#32e6b4"/>
<rect x="617.9" y="343.9" width="2.2" height="2.2" fill="#d428d8"/>
<rect x="610.3" y="337.4" width="2.2" height="2.2" fill="#32e6b4"/>
<rect x="611.9" y="349.6" width="2.2" height="2.2" fill="#d428d8"/>
<rect x="650.1" y="281.5" width="2.8" height="2.8" fill="#3aa6f2"/>
<rect x="671.4" y="288.5" width="2.8" height="2.8" fill="#3aa6f2"/>
<rect x="658.7" y="290.0" width="2.8" height="2.8" fill="#3288ee"/>
<rect x="654.1" y="286.2" width="2.8" height="2.8" fill="#2fc6ee"/>
<rect x="665.0" y="285.3" width="2.8" height="2.8" fill="#3288ee"/>
<rect x="650.7" y="279.5" width="2.8" height="2.8" fill="#3288ee"/>
<rect x="669.0" y="279.7" width="2.8" height="2.8" fill="#2fc6ee"/>
<rect x="656.6" y="290.5" width="2.8" height="2.8" fill="#3288ee"/>
<rect x="665.2" y="289.0" width="2.8" height="2.8" fill="#3aa6f2"/>
<rect x="664.3" y="295.3" width="2.8" height="2.8" fill="#32e6b4"/>
<rect x="657.2" y="285.8" width="2.8" height="2.8" fill="#32e6b4"/>
<rect x="659.6" y="285.8" width="2.8" height="2.8" fill="#2fc6ee"/>
<rect x="651.0" y="284.1" width="2.8" height="2.8" fill="#3aa6f2"/>
<rect x="649.4" y="290.5" width="2.8" height="2.8" fill="#2fc6ee"/>
<rect x="649.3" y="284.8" width="2.8" height="2.8" fill="#2fc6ee"/>
<rect x="656.8" y="292.4" width="2.8" height="2.8" fill="#2fc6ee"/>
<rect x="662.9" y="287.9" width="2.8" height="2.8" fill="#32e6b4"/>
<rect x="659.2" y="288.1" width="2.8" height="2.8" fill="#2fc6ee"/>
<rect x="650.5" y="295.6" width="2.8" height="2.8" fill="#f0d228"/>
<rect x="653.7" y="297.8" width="2.8" height="2.8" fill="#3aa6f2"/>
<rect x="660.5" y="280.3" width="2.8" height="2.8" fill="#3aa6f2"/>
<rect x="656.4" y="293.9" width="2.8" height="2.8" fill="#2fc6ee"/>
<rect x="667.1" y="282.9" width="2.8" height="2.8" fill="#2fc6ee"/>
<rect x="669.9" y="294.1" width="2.8" height="2.8" fill="#3aa6f2"/>
<rect x="660.6" y="300.0" width="2.8" height="2.8" fill="#2fc6ee"/>
<rect x="667.4" y="289.5" width="2.8" height="2.8" fill="#d428d8"/>
<rect x="660.2" y="292.4" width="2.8" height="2.8" fill="#3aa6f2"/>
<rect x="668.7" y="295.3" width="2.8" height="2.8" fill="#3288ee"/>
<rect x="652.0" y="288.4" width="2.8" height="2.8" fill="#f0d228"/>
<rect x="654.1" y="281.9" width="2.8" height="2.8" fill="#5a24d2"/>
<rect x="662.9" y="284.2" width="2.8" height="2.8" fill="#f0d228"/>
<rect x="656.4" y="280.8" width="2.8" height="2.8" fill="#3288ee"/>
<rect x="659.3" y="284.1" width="2.8" height="2.8" fill="#3288ee"/>
<rect x="663.4" y="299.8" width="2.8" height="2.8" fill="#2fc6ee"/>
<rect x="659.5" y="292.9" width="2.8" height="2.8" fill="#2fc6ee"/>
<rect x="648.9" y="293.1" width="2.8" height="2.8" fill="#3aa6f2"/>
<rect x="667.7" y="295.6" width="2.8" height="2.8" fill="#3288ee"/>
<rect x="670.6" y="286.7" width="2.8" height="2.8" fill="#2fc6ee"/>
<rect x="655.6" y="297.0" width="2.8" height="2.8" fill="#f0d228"/>
<rect x="657.3" y="285.8" width="2.8" height="2.8" fill="#2fc6ee"/>
<rect x="666.2" y="279.4" width="2.8" height="2.8" fill="#3288ee"/>
<rect x="659.2" y="293.0" width="2.8" height="2.8" fill="#3aa6f2"/>
<rect x="664.3" y="284.4" width="2.8" height="2.8" fill="#2fc6ee"/>
<rect x="661.4" y="275.2" width="2.8" height="2.8" fill="#f0d228"/>
<rect x="664.1" y="289.3" width="2.8" height="2.8" fill="#3288ee"/>
<rect x="658.3" y="299.0" width="2.8" height="2.8" fill="#2fc6ee"/>
<rect x="660.1" y="296.0" width="2.8" height="2.8" fill="#3ed86a"/>
<rect x="653.6" y="286.3" width="2.8" height="2.8" fill="#3288ee"/>
<rect x="670.8" y="293.1" width="2.8" height="2.8" fill="#3aa6f2"/>
<rect x="658.0" y="300.3" width="2.8" height="2.8" fill="#3aa6f2"/>
<rect x="660.4" y="299.0" width="2.8" height="2.8" fill="#d428d8"/>
<rect x="668.2" y="279.4" width="2.8" height="2.8" fill="#3288ee"/>
<rect x="663.3" y="278.0" width="2.8" height="2.8" fill="#3aa6f2"/>
<rect x="655.4" y="289.1" width="2.8" height="2.8" fill="#2fc6ee"/>
<rect x="659.6" y="296.3" width="2.8" height="2.8" fill="#2fc6ee"/>
<rect x="658.8" y="275.4" width="2.8" height="2.8" fill="#2fc6ee"/>
<rect x="658.6" y="291.8" width="2.8" height="2.8" fill="#3aa6f2"/>
<rect x="663.0" y="280.2" width="2.8" height="2.8" fill="#3aa6f2"/>
<rect x="658.8" y="289.5" width="2.8" height="2.8" fill="#3288ee"/>
<rect x="660.3" y="281.5" width="2.8" height="2.8" fill="#3aa6f2"/>
<rect x="653.6" y="290.3" width="2.8" height="2.8" fill="#2fc6ee"/>
<rect x="649.9" y="287.0" width="2.8" height="2.8" fill="#2fc6ee"/>
<rect x="664.7" y="286.6" width="2.8" height="2.8" fill="#2fc6ee"/>
<rect x="664.7" y="296.6" width="2.8" height="2.8" fill="#d428d8"/>
<rect x="650.8" y="294.7" width="2.8" height="2.8" fill="#3ed86a"/>
<rect x="656.5" y="281.7" width="2.8" height="2.8" fill="#3288ee"/>
<rect x="659.8" y="302.3" width="2.8" height="2.8" fill="#3288ee"/>
<rect x="651.0" y="286.7" width="2.8" height="2.8" fill="#3aa6f2"/>
<rect x="657.5" y="286.4" width="2.8" height="2.8" fill="#2fc6ee"/>
<rect x="655.2" y="294.8" width="2.8" height="2.8" fill="#2fc6ee"/>
<rect x="655.7" y="287.4" width="2.8" height="2.8" fill="#5a24d2"/>
<rect x="663.4" y="288.9" width="2.8" height="2.8" fill="#2fc6ee"/>
<rect x="652.8" y="299.1" width="2.8" height="2.8" fill="#2fc6ee"/>
<rect x="667.6" y="282.2" width="2.8" height="2.8" fill="#3288ee"/>
<rect x="664.9" y="301.1" width="2.8" height="2.8" fill="#3aa6f2"/>
<rect x="662.0" y="294.2" width="2.8" height="2.8" fill="#2fc6ee"/>
<rect x="654.1" y="297.0" width="2.8" height="2.8" fill="#3aa6f2"/>
<rect x="658.1" y="276.6" width="2.8" height="2.8" fill="#2fc6ee"/>
<rect x="663.7" y="297.0" width="2.8" height="2.8" fill="#2fc6ee"/>
<rect x="663.0" y="280.8" width="2.8" height="2.8" fill="#3aa6f2"/>
<rect x="669.9" y="287.3" width="2.8" height="2.8" fill="#3ed86a"/>
<rect x="671.3" y="292.0" width="2.8" height="2.8" fill="#3aa6f2"/>
<rect x="660.8" y="281.3" width="2.8" height="2.8" fill="#32e6b4"/>
<rect x="663.6" y="289.5" width="2.8" height="2.8" fill="#2fc6ee"/>
<rect x="654.4" y="288.6" width="2.8" height="2.8" fill="#3aa6f2"/>
<rect x="653.9" y="297.1" width="2.8" height="2.8" fill="#3aa6f2"/>
<rect x="660.3" y="302.0" width="2.8" height="2.8" fill="#3aa6f2"/>
<rect x="659.4" y="300.8" width="2.8" height="2.8" fill="#32e6b4"/>
<rect x="664.4" y="292.8" width="2.8" height="2.8" fill="#3ed86a"/>
<rect x="660.0" y="298.0" width="2.8" height="2.8" fill="#3aa6f2"/>
<rect x="652.4" y="281.0" width="2.8" height="2.8" fill="#2fc6ee"/>
<rect x="669.1" y="294.4" width="2.8" height="2.8" fill="#2fc6ee"/>
<rect x="670.4" y="286.7" width="2.8" height="2.8" fill="#3aa6f2"/>
<rect x="670.1" y="293.4" width="2.8" height="2.8" fill="#2fc6ee"/>
<rect x="662.8" y="294.0" width="2.8" height="2.8" fill="#3aa6f2"/>
<rect x="659.0" y="279.0" width="2.8" height="2.8" fill="#32e6b4"/>
<rect x="655.3" y="275.6" width="2.8" height="2.8" fill="#2fc6ee"/>
<rect x="652.5" y="279.7" width="2.8" height="2.8" fill="#3ed86a"/>
<rect x="656.9" y="287.9" width="2.8" height="2.8" fill="#3aa6f2"/>
<rect x="664.3" y="281.5" width="2.8" height="2.8" fill="#d428d8"/>
<rect x="649.0" y="285.8" width="2.8" height="2.8" fill="#3aa6f2"/>
<rect x="657.2" y="283.0" width="2.8" height="2.8" fill="#2fc6ee"/>
<rect x="652.9" y="291.0" width="2.8" height="2.8" fill="#3aa6f2"/>
<rect x="662.7" y="296.0" width="2.8" height="2.8" fill="#f0d228"/>
<rect x="666.2" y="292.6" width="2.8" height="2.8" fill="#3aa6f2"/>
<rect x="668.9" y="294.6" width="2.8" height="2.8" fill="#3aa6f2"/>
<rect x="663.5" y="295.1" width="2.8" height="2.8" fill="#3aa6f2"/>
<rect x="650.4" y="289.3" width="2.8" height="2.8" fill="#3aa6f2"/>
<rect x="661.9" y="297.4" width="2.8" height="2.8" fill="#2fc6ee"/>
<rect x="668.9" y="291.0" width="2.8" height="2.8" fill="#5a24d2"/>
<rect x="652.0" y="310.5" width="2.8" height="2.8" fill="#32e6b4"/>
<rect x="637.9" y="305.6" width="2.8" height="2.8" fill="#2fc6ee"/>
<rect x="649.5" y="309.1" width="2.8" height="2.8" fill="#3aa6f2"/>
<rect x="631.8" y="301.9" width="2.8" height="2.8" fill="#3ed86a"/>
<rect x="657.3" y="311.6" width="2.8" height="2.8" fill="#2fc6ee"/>
<rect x="661.9" y="298.4" width="2.8" height="2.8" fill="#2fc6ee"/>
<rect x="623.6" y="311.3" width="2.8" height="2.8" fill="#3aa6f2"/>
<rect x="657.8" y="313.5" width="2.8" height="2.8" fill="#32e6b4"/>
<rect x="654.1" y="300.7" width="2.8" height="2.8" fill="#3aa6f2"/>
<rect x="650.5" y="305.8" width="2.8" height="2.8" fill="#3288ee"/>
<rect x="638.2" y="306.2" width="2.8" height="2.8" fill="#3aa6f2"/>
<rect x="649.7" y="300.6" width="2.8" height="2.8" fill="#2fc6ee"/>
<rect x="627.4" y="301.7" width="2.8" height="2.8" fill="#3aa6f2"/>
<rect x="652.5" y="309.0" width="2.8" height="2.8" fill="#32e6b4"/>
<rect x="633.0" y="310.0" width="2.8" height="2.8" fill="#3aa6f2"/>
<rect x="630.6" y="306.4" width="2.8" height="2.8" fill="#3aa6f2"/>
<rect x="644.4" y="305.9" width="2.8" height="2.8" fill="#3ed86a"/>
<rect x="645.9" y="302.8" width="2.8" height="2.8" fill="#2fc6ee"/>
<rect x="663.7" y="297.0" width="2.8" height="2.8" fill="#3ed86a"/>
<rect x="624.1" y="306.7" width="2.8" height="2.8" fill="#3ed86a"/>
<rect x="666.3" y="304.3" width="2.8" height="2.8" fill="#32e6b4"/>
<rect x="655.0" y="301.8" width="2.8" height="2.8" fill="#3aa6f2"/>
<rect x="626.7" y="313.0" width="2.8" height="2.8" fill="#2fc6ee"/>
<rect x="633.5" y="298.9" width="2.8" height="2.8" fill="#3aa6f2"/>
<rect x="631.2" y="314.6" width="2.8" height="2.8" fill="#3ed86a"/>
<rect x="638.7" y="299.8" width="2.8" height="2.8" fill="#3ed86a"/>
<rect x="652.0" y="304.7" width="2.8" height="2.8" fill="#3aa6f2"/>
<rect x="627.1" y="303.5" width="2.8" height="2.8" fill="#3aa6f2"/>
<rect x="626.2" y="303.2" width="2.8" height="2.8" fill="#3aa6f2"/>
<rect x="655.1" y="313.4" width="2.8" height="2.8" fill="#2fc6ee"/>
<rect x="663.8" y="300.5" width="2.8" height="2.8" fill="#2fc6ee"/>
<rect x="662.1" y="302.4" width="2.8" height="2.8" fill="#3aa6f2"/>
<rect x="623.6" y="304.4" width="2.8" height="2.8" fill="#3288ee"/>
<rect x="647.7" y="303.8" width="2.8" height="2.8" fill="#3ed86a"/>
<rect x="655.4" y="313.7" width="2.8" height="2.8" fill="#3aa6f2"/>
<rect x="625.3" y="313.3" width="2.8" height="2.8" fill="#3aa6f2"/>
<rect x="649.8" y="299.6" width="2.8" height="2.8" fill="#3aa6f2"/>
<rect x="640.7" y="302.9" width="2.8" height="2.8" fill="#3288ee"/>
<rect x="637.8" y="315.7" width="2.8" height="2.8" fill="#2fc6ee"/>
<rect x="658.0" y="309.2" width="2.8" height="2.8" fill="#2fc6ee"/>
<rect x="645.9" y="311.0" width="2.8" height="2.8" fill="#2fc6ee"/>
<rect x="663.5" y="304.8" width="2.8" height="2.8" fill="#2fc6ee"/>
<rect x="655.2" y="309.5" width="2.8" height="2.8" fill="#3aa6f2"/>
<rect x="642.9" y="314.8" width="2.8" height="2.8" fill="#2fc6ee"/>
<rect x="626.5" y="306.0" width="2.8" height="2.8" fill="#3aa6f2"/>
<rect x="633.6" y="301.7" width="2.8" height="2.8" fill="#3aa6f2"/>
<rect x="665.5" y="301.8" width="2.8" height="2.8" fill="#3aa6f2"/>
<rect x="631.6" y="306.3" width="2.8" height="2.8" fill="#3aa6f2"/>
<rect x="638.7" y="299.9" width="2.8" height="2.8" fill="#32e6b4"/>
<rect x="624.1" y="306.6" width="2.8" height="2.8" fill="#3288ee"/>
<rect x="643.5" y="301.0" width="2.8" height="2.8" fill="#3aa6f2"/>
<rect x="666.4" y="305.6" width="2.8" height="2.8" fill="#32e6b4"/>
<rect x="645.8" y="301.5" width="2.8" height="2.8" fill="#32e6b4"/>
<rect x="636.3" y="298.4" width="2.8" height="2.8" fill="#32e6b4"/>
<rect x="637.5" y="312.8" width="2.8" height="2.8" fill="#32e6b4"/>
<rect x="661.4" y="311.6" width="2.8" height="2.8" fill="#3ed86a"/>
<rect x="638.2" y="311.5" width="2.8" height="2.8" fill="#32e6b4"/>
<rect x="637.9" y="303.4" width="2.8" height="2.8" fill="#2fc6ee"/>
<rect x="643.5" y="308.1" width="2.8" height="2.8" fill="#3aa6f2"/>
<rect x="626.4" y="306.7" width="2.8" height="2.8" fill="#3aa6f2"/>
<rect x="657.0" y="313.6" width="2.8" height="2.8" fill="#2fc6ee"/>
<rect x="633.1" y="301.6" width="2.8" height="2.8" fill="#3ed86a"/>
<rect x="650.3" y="305.2" width="2.8" height="2.8" fill="#3aa6f2"/>
<rect x="659.6" y="314.1" width="2.8" height="2.8" fill="#2fc6ee"/>
<rect x="626.5" y="305.1" width="2.8" height="2.8" fill="#3288ee"/>
<rect x="661.8" y="306.1" width="2.8" height="2.8" fill="#2fc6ee"/>
<rect x="643.1" y="298.1" width="2.8" height="2.8" fill="#3288ee"/>
<rect x="644.9" y="306.0" width="2.8" height="2.8" fill="#3ed86a"/>
<rect x="632.0" y="298.8" width="2.8" height="2.8" fill="#32e6b4"/>
<rect x="627.6" y="316.0" width="2.8" height="2.8" fill="#2fc6ee"/>
<rect x="663.9" y="311.0" width="2.8" height="2.8" fill="#3aa6f2"/>
<rect x="659.5" y="314.5" width="2.8" height="2.8" fill="#2fc6ee"/>
<rect x="656.6" y="301.3" width="2.8" height="2.8" fill="#2fc6ee"/>
<rect x="650.3" y="302.7" width="2.8" height="2.8" fill="#32e6b4"/>
<rect x="649.4" y="307.2" width="2.8" height="2.8" fill="#3ed86a"/>
<rect x="652.7" y="298.8" width="2.8" height="2.8" fill="#2fc6ee"/>
<rect x="634.4" y="315.5" width="2.8" height="2.8" fill="#32e6b4"/>
<rect x="638.5" y="301.1" width="2.8" height="2.8" fill="#2fc6ee"/>
<rect x="620.7" y="307.3" width="2.8" height="2.8" fill="#3ed86a"/>
<rect x="633.4" y="302.9" width="2.8" height="2.8" fill="#3288ee"/>
<rect x="661.3" y="306.1" width="2.8" height="2.8" fill="#32e6b4"/>
<rect x="639.5" y="309.6" width="2.8" height="2.8" fill="#2fc6ee"/>
<rect x="621.6" y="306.6" width="2.8" height="2.8" fill="#3aa6f2"/>
<rect x="650.4" y="298.2" width="2.8" height="2.8" fill="#32e6b4"/>
<rect x="651.3" y="315.1" width="2.8" height="2.8" fill="#32e6b4"/>
<rect x="643.3" y="310.5" width="2.8" height="2.8" fill="#3aa6f2"/>
<rect x="639.9" y="310.3" width="2.8" height="2.8" fill="#32e6b4"/>
<rect x="620.9" y="302.4" width="2.8" height="2.8" fill="#3288ee"/>
<rect x="643.8" y="300.7" width="2.8" height="2.8" fill="#32e6b4"/>
<rect x="634.9" y="313.0" width="2.8" height="2.8" fill="#32e6b4"/>
<rect x="642.0" y="301.9" width="2.8" height="2.8" fill="#3aa6f2"/>
<rect x="625.6" y="309.1" width="2.8" height="2.8" fill="#2fc6ee"/>
<rect x="629.2" y="301.1" width="2.8" height="2.8" fill="#3ed86a"/>
<rect x="662.5" y="297.7" width="2.8" height="2.8" fill="#2fc6ee"/>
<rect x="627.3" y="304.5" width="2.8" height="2.8" fill="#32e6b4"/>
<rect x="621.7" y="308.5" width="2.8" height="2.8" fill="#3ed86a"/>
<rect x="638.7" y="314.6" width="2.8" height="2.8" fill="#3aa6f2"/>
<rect x="663.5" y="303.2" width="2.8" height="2.8" fill="#32e6b4"/>
<rect x="650.6" y="307.1" width="2.8" height="2.8" fill="#3ed86a"/>
<rect x="622.1" y="309.9" width="2.8" height="2.8" fill="#3ed86a"/>
<rect x="655.2" y="326.5" width="2.6" height="2.6" fill="#3ed86a"/>
<rect x="640.4" y="312.7" width="2.6" height="2.6" fill="#3aa6f2"/>
<rect x="638.5" y="318.6" width="2.6" height="2.6" fill="#2fc6ee"/>
<rect x="649.0" y="323.3" width="2.6" height="2.6" fill="#3ed86a"/>
<rect x="644.5" y="324.2" width="2.6" height="2.6" fill="#3ed86a"/>
<rect x="638.6" y="322.6" width="2.6" height="2.6" fill="#32e6b4"/>
<rect x="644.9" y="325.6" width="2.6" height="2.6" fill="#32e6b4"/>
<rect x="643.8" y="323.0" width="2.6" height="2.6" fill="#3ed86a"/>
<rect x="637.4" y="318.5" width="2.6" height="2.6" fill="#3ed86a"/>
<rect x="637.6" y="313.2" width="2.6" height="2.6" fill="#2fc6ee"/>
<rect x="654.4" y="313.6" width="2.6" height="2.6" fill="#32e6b4"/>
<rect x="653.1" y="325.3" width="2.6" height="2.6" fill="#3aa6f2"/>
<rect x="644.7" y="317.4" width="2.6" height="2.6" fill="#2fc6ee"/>
<rect x="642.5" y="322.7" width="2.6" height="2.6" fill="#3aa6f2"/>
<rect x="657.0" y="316.9" width="2.6" height="2.6" fill="#2fc6ee"/>
<rect x="637.2" y="316.0" width="2.6" height="2.6" fill="#3ed86a"/>
<rect x="652.4" y="319.2" width="2.6" height="2.6" fill="#3ed86a"/>
<rect x="654.1" y="325.5" width="2.6" height="2.6" fill="#3ed86a"/>
<rect x="639.6" y="319.7" width="2.6" height="2.6" fill="#2fc6ee"/>
<rect x="654.4" y="323.0" width="2.6" height="2.6" fill="#32e6b4"/>
<rect x="650.1" y="317.3" width="2.6" height="2.6" fill="#3aa6f2"/>
<rect x="646.8" y="323.7" width="2.6" height="2.6" fill="#2fc6ee"/>
<rect x="648.0" y="318.2" width="2.6" height="2.6" fill="#32e6b4"/>
<rect x="642.1" y="313.6" width="2.6" height="2.6" fill="#2fc6ee"/>
<rect x="647.3" y="320.3" width="2.6" height="2.6" fill="#32e6b4"/>
<rect x="658.3" y="325.1" width="2.6" height="2.6" fill="#2fc6ee"/>
<rect x="642.5" y="313.9" width="2.6" height="2.6" fill="#2fc6ee"/>
<rect x="646.0" y="326.5" width="2.6" height="2.6" fill="#3ed86a"/>
<rect x="640.5" y="314.6" width="2.6" height="2.6" fill="#3ed86a"/>
<rect x="650.3" y="322.1" width="2.6" height="2.6" fill="#2fc6ee"/>
<rect x="653.9" y="316.8" width="2.6" height="2.6" fill="#3aa6f2"/>
<rect x="649.2" y="317.9" width="2.6" height="2.6" fill="#3aa6f2"/>
<rect x="641.1" y="316.2" width="2.6" height="2.6" fill="#32e6b4"/>
<rect x="641.9" y="316.6" width="2.6" height="2.6" fill="#32e6b4"/>
<rect x="643.9" y="318.2" width="2.6" height="2.6" fill="#32e6b4"/>
<rect x="647.9" y="315.9" width="2.6" height="2.6" fill="#2fc6ee"/>
<rect x="651.1" y="326.6" width="2.6" height="2.6" fill="#2fc6ee"/>
<rect x="636.8" y="325.1" width="2.6" height="2.6" fill="#32e6b4"/>
<rect x="655.2" y="325.5" width="2.6" height="2.6" fill="#2fc6ee"/>
<rect x="656.0" y="316.0" width="2.6" height="2.6" fill="#2fc6ee"/>
<rect x="640.9" y="326.3" width="2.6" height="2.6" fill="#32e6b4"/>
<rect x="657.2" y="317.9" width="2.6" height="2.6" fill="#32e6b4"/>
<rect x="646.6" y="316.3" width="2.6" height="2.6" fill="#2fc6ee"/>
<rect x="639.0" y="321.0" width="2.6" height="2.6" fill="#3aa6f2"/>
<rect x="641.5" y="317.9" width="2.6" height="2.6" fill="#32e6b4"/>
<rect x="667.3" y="324.8" width="2.4" height="2.4" fill="#2fc6ee"/>
<rect x="674.0" y="321.3" width="2.4" height="2.4" fill="#2fc6ee"/>
<rect x="676.6" y="323.0" width="2.4" height="2.4" fill="#3aa6f2"/>
<rect x="674.9" y="316.7" width="2.4" height="2.4" fill="#3aa6f2"/>
<rect x="667.7" y="315.1" width="2.4" height="2.4" fill="#3aa6f2"/>
<rect x="673.4" y="315.4" width="2.4" height="2.4" fill="#2fc6ee"/>
<rect x="676.4" y="321.4" width="2.4" height="2.4" fill="#2fc6ee"/>
<rect x="674.5" y="315.7" width="2.4" height="2.4" fill="#2fc6ee"/>
<rect x="671.6" y="317.5" width="2.4" height="2.4" fill="#3aa6f2"/>
<rect x="674.8" y="319.0" width="2.4" height="2.4" fill="#2fc6ee"/>
<rect x="679.7" y="269.8" width="2.6" height="2.6" fill="#5a24d2"/>
<rect x="681.3" y="261.0" width="2.6" height="2.6" fill="#5a24d2"/>
<rect x="685.0" y="267.0" width="2.6" height="2.6" fill="#d428d8"/>
<rect x="678.0" y="260.8" width="2.6" height="2.6" fill="#2fc6ee"/>
<rect x="681.5" y="273.8" width="2.6" height="2.6" fill="#d428d8"/>
<rect x="683.9" y="266.5" width="2.6" height="2.6" fill="#2fc6ee"/>
<rect x="676.8" y="261.5" width="2.6" height="2.6" fill="#2fc6ee"/>
<rect x="685.0" y="275.3" width="2.6" height="2.6" fill="#3aa6f2"/>
<rect x="683.9" y="275.5" width="2.6" height="2.6" fill="#2fc6ee"/>
<rect x="677.0" y="265.2" width="2.6" height="2.6" fill="#2fc6ee"/>
<rect x="689.5" y="262.4" width="2.6" height="2.6" fill="#32e6b4"/>
<rect x="686.8" y="273.4" width="2.6" height="2.6" fill="#3aa6f2"/>
<rect x="679.5" y="274.1" width="2.6" height="2.6" fill="#2fc6ee"/>
<rect x="690.3" y="268.4" width="2.6" height="2.6" fill="#2fc6ee"/>
<rect x="684.4" y="270.9" width="2.6" height="2.6" fill="#3aa6f2"/>
<rect x="689.2" y="270.6" width="2.6" height="2.6" fill="#2fc6ee"/>
<rect x="684.9" y="274.4" width="2.6" height="2.6" fill="#d428d8"/>
<rect x="684.5" y="263.8" width="2.6" height="2.6" fill="#32e6b4"/>
<rect x="677.6" y="264.2" width="2.6" height="2.6" fill="#d428d8"/>
<rect x="689.7" y="263.2" width="2.6" height="2.6" fill="#5a24d2"/>
<rect x="676.7" y="264.7" width="2.6" height="2.6" fill="#3aa6f2"/>
<rect x="675.4" y="269.7" width="2.6" height="2.6" fill="#2fc6ee"/>
<rect x="685.4" y="265.9" width="2.6" height="2.6" fill="#d428d8"/>
<rect x="684.3" y="269.5" width="2.6" height="2.6" fill="#f0d228"/>
<rect x="685.1" y="265.6" width="2.6" height="2.6" fill="#3aa6f2"/>
<rect x="650.8" y="271.3" width="2.4" height="2.4" fill="#3aa6f2"/>
<rect x="651.9" y="263.7" width="2.4" height="2.4" fill="#2fc6ee"/>
<rect x="653.5" y="268.6" width="2.4" height="2.4" fill="#2fc6ee"/>
<rect x="651.1" y="270.7" width="2.4" height="2.4" fill="#3aa6f2"/>
<rect x="656.5" y="273.8" width="2.4" height="2.4" fill="#3aa6f2"/>
<rect x="646.3" y="262.9" width="2.4" height="2.4" fill="#3aa6f2"/>
<rect x="649.9" y="273.6" width="2.4" height="2.4" fill="#32e6b4"/>
<rect x="651.9" y="261.5" width="2.4" height="2.4" fill="#32e6b4"/>
<rect x="646.6" y="275.6" width="2.4" height="2.4" fill="#3aa6f2"/>
<rect x="655.7" y="269.0" width="2.4" height="2.4" fill="#2fc6ee"/>
<rect x="655.3" y="275.1" width="2.4" height="2.4" fill="#32e6b4"/>
<rect x="658.1" y="263.0" width="2.4" height="2.4" fill="#2fc6ee"/>
<rect x="500.1" y="334.2" width="2.5" height="2.5" fill="#2a6fe6"/>
<rect x="489.5" y="350.7" width="2.5" height="2.5" fill="#2a6fe6"/>
<rect x="482.8" y="365.0" width="2.5" height="2.5" fill="#2a6fe6"/>
<rect x="486.1" y="343.1" width="2.5" height="2.5" fill="#2a6fe6"/>
<rect x="483.9" y="344.6" width="2.5" height="2.5" fill="#3aa6f2"/>
<rect x="483.5" y="348.3" width="2.5" height="2.5" fill="#3288ee"/>
<rect x="473.8" y="337.3" width="2.5" height="2.5" fill="#2fc6ee"/>
<rect x="491.3" y="325.5" width="2.5" height="2.5" fill="#2fc6ee"/>
<rect x="477.7" y="353.8" width="2.5" height="2.5" fill="#2fc6ee"/>
<rect x="473.0" y="343.1" width="2.5" height="2.5" fill="#3288ee"/>
<rect x="475.4" y="335.9" width="2.5" height="2.5" fill="#3aa6f2"/>
<rect x="485.8" y="346.5" width="2.5" height="2.5" fill="#3aa6f2"/>
<rect x="491.1" y="352.5" width="2.5" height="2.5" fill="#2a6fe6"/>
<rect x="470.1" y="343.1" width="2.5" height="2.5" fill="#2fc6ee"/>
<rect x="479.8" y="325.0" width="2.5" height="2.5" fill="#3288ee"/>
<rect x="472.8" y="340.8" width="2.5" height="2.5" fill="#3288ee"/>
<rect x="490.2" y="331.2" width="2.5" height="2.5" fill="#3288ee"/>
<rect x="492.9" y="327.7" width="2.5" height="2.5" fill="#3aa6f2"/>
<rect x="486.2" y="340.4" width="2.5" height="2.5" fill="#3288ee"/>
<rect x="466.3" y="337.0" width="2.5" height="2.5" fill="#2fc6ee"/>
<rect x="486.8" y="346.0" width="2.5" height="2.5" fill="#2a6fe6"/>
<rect x="486.6" y="335.3" width="2.5" height="2.5" fill="#2fc6ee"/>
<rect x="475.9" y="320.4" width="2.5" height="2.5" fill="#3288ee"/>
<rect x="482.0" y="337.5" width="2.5" height="2.5" fill="#2fc6ee"/>
<rect x="481.5" y="352.2" width="2.5" height="2.5" fill="#2fc6ee"/>
<rect x="474.2" y="345.1" width="2.5" height="2.5" fill="#3288ee"/>
<rect x="476.8" y="352.7" width="2.5" height="2.5" fill="#3aa6f2"/>
<rect x="490.4" y="317.9" width="2.5" height="2.5" fill="#3288ee"/>
<rect x="489.2" y="348.1" width="2.5" height="2.5" fill="#3288ee"/>
<rect x="467.8" y="335.3" width="2.5" height="2.5" fill="#2a6fe6"/>
<rect x="491.6" y="322.3" width="2.5" height="2.5" fill="#2fc6ee"/>
<rect x="476.6" y="316.0" width="2.5" height="2.5" fill="#3288ee"/>
<rect x="481.7" y="359.2" width="2.5" height="2.5" fill="#3288ee"/>
<rect x="495.6" y="330.2" width="2.5" height="2.5" fill="#2a6fe6"/>
<rect x="485.3" y="320.9" width="2.5" height="2.5" fill="#2a6fe6"/>
<rect x="478.8" y="340.9" width="2.5" height="2.5" fill="#3288ee"/>
<rect x="487.6" y="348.9" width="2.5" height="2.5" fill="#3288ee"/>
<rect x="477.8" y="357.6" width="2.5" height="2.5" fill="#3288ee"/>
<rect x="494.0" y="344.4" width="2.5" height="2.5" fill="#3aa6f2"/>
<rect x="481.9" y="308.3" width="2.5" height="2.5" fill="#2a6fe6"/>
<rect x="475.4" y="323.0" width="2.5" height="2.5" fill="#3aa6f2"/>
<rect x="474.9" y="350.3" width="2.5" height="2.5" fill="#3aa6f2"/>
<rect x="486.4" y="333.0" width="2.5" height="2.5" fill="#3aa6f2"/>
<rect x="479.6" y="330.2" width="2.5" height="2.5" fill="#3288ee"/>
<rect x="477.2" y="349.5" width="2.5" height="2.5" fill="#3288ee"/>
<rect x="485.1" y="350.2" width="2.5" height="2.5" fill="#3288ee"/>
<rect x="485.4" y="319.4" width="2.5" height="2.5" fill="#2fc6ee"/>
<rect x="482.4" y="356.1" width="2.5" height="2.5" fill="#2a6fe6"/>
<rect x="499.2" y="335.8" width="2.5" height="2.5" fill="#3288ee"/>
<rect x="472.5" y="349.1" width="2.5" height="2.5" fill="#2fc6ee"/>
<rect x="492.4" y="334.1" width="2.5" height="2.5" fill="#3288ee"/>
<rect x="493.1" y="344.0" width="2.5" height="2.5" fill="#3aa6f2"/>
<rect x="479.9" y="345.3" width="2.5" height="2.5" fill="#3aa6f2"/>
<rect x="497.2" y="334.8" width="2.5" height="2.5" fill="#2fc6ee"/>
<rect x="486.1" y="348.4" width="2.5" height="2.5" fill="#3288ee"/>
<rect x="516.3" y="291.0" width="2.4" height="2.4" fill="#2a6fe6"/>
<rect x="513.3" y="341.9" width="2.4" height="2.4" fill="#2a6fe6"/>
<rect x="516.7" y="329.5" width="2.4" height="2.4" fill="#3288ee"/>
<rect x="511.9" y="324.3" width="2.4" height="2.4" fill="#2a6fe6"/>
<rect x="514.7" y="269.2" width="2.4" height="2.4" fill="#2a6fe6"/>
<rect x="516.2" y="325.1" width="2.4" height="2.4" fill="#3aa6f2"/>
<rect x="505.4" y="286.3" width="2.4" height="2.4" fill="#3aa6f2"/>
<rect x="520.6" y="317.3" width="2.4" height="2.4" fill="#3aa6f2"/>
<rect x="504.5" y="281.1" width="2.4" height="2.4" fill="#2a6fe6"/>
<rect x="515.3" y="291.0" width="2.4" height="2.4" fill="#3288ee"/>
<rect x="508.7" y="275.3" width="2.4" height="2.4" fill="#3aa6f2"/>
<rect x="524.7" y="272.9" width="2.4" height="2.4" fill="#3aa6f2"/>
<rect x="503.2" y="294.5" width="2.4" height="2.4" fill="#3288ee"/>
<rect x="519.9" y="328.7" width="2.4" height="2.4" fill="#2a6fe6"/>
<rect x="507.4" y="267.5" width="2.4" height="2.4" fill="#3288ee"/>
<rect x="507.5" y="343.6" width="2.4" height="2.4" fill="#2a6fe6"/>
<rect x="501.6" y="295.9" width="2.4" height="2.4" fill="#2a6fe6"/>
<rect x="517.4" y="305.8" width="2.4" height="2.4" fill="#3aa6f2"/>
<rect x="507.9" y="259.0" width="2.4" height="2.4" fill="#2a6fe6"/>
<rect x="515.3" y="296.5" width="2.4" height="2.4" fill="#3aa6f2"/>
<rect x="506.6" y="340.4" width="2.4" height="2.4" fill="#3aa6f2"/>
<rect x="514.6" y="330.2" width="2.4" height="2.4" fill="#2a6fe6"/>
<rect x="521.1" y="322.3" width="2.4" height="2.4" fill="#3aa6f2"/>
<rect x="521.9" y="332.7" width="2.4" height="2.4" fill="#3aa6f2"/>
<rect x="514.8" y="279.2" width="2.4" height="2.4" fill="#3288ee"/>
<rect x="516.2" y="301.3" width="2.4" height="2.4" fill="#2a6fe6"/>
<rect x="507.0" y="325.5" width="2.4" height="2.4" fill="#2a6fe6"/>
<rect x="506.6" y="296.0" width="2.4" height="2.4" fill="#3aa6f2"/>
<rect x="515.9" y="281.3" width="2.4" height="2.4" fill="#2a6fe6"/>
<rect x="512.4" y="258.7" width="2.4" height="2.4" fill="#2a6fe6"/>
<rect x="513.2" y="321.6" width="2.4" height="2.4" fill="#3288ee"/>
<rect x="522.3" y="288.9" width="2.4" height="2.4" fill="#3288ee"/>
<rect x="510.1" y="304.8" width="2.4" height="2.4" fill="#3288ee"/>
<rect x="501.7" y="310.0" width="2.4" height="2.4" fill="#3288ee"/>
<rect x="518.0" y="350.0" width="2.4" height="2.4" fill="#3288ee"/>
<rect x="461.6" y="356.8" width="2.4" height="2.4" fill="#2fc6ee"/>
<rect x="460.7" y="359.9" width="2.4" height="2.4" fill="#3aa6f2"/>
<rect x="461.5" y="373.0" width="2.4" height="2.4" fill="#3aa6f2"/>
<rect x="461.6" y="366.1" width="2.4" height="2.4" fill="#3aa6f2"/>
<rect x="457.0" y="374.3" width="2.4" height="2.4" fill="#3aa6f2"/>
<rect x="461.5" y="381.8" width="2.4" height="2.4" fill="#2fc6ee"/>
<rect x="468.6" y="364.5" width="2.4" height="2.4" fill="#3288ee"/>
<rect x="457.6" y="365.3" width="2.4" height="2.4" fill="#3288ee"/>
<rect x="454.0" y="366.4" width="2.4" height="2.4" fill="#3aa6f2"/>
<rect x="463.2" y="374.0" width="2.4" height="2.4" fill="#2fc6ee"/>
<rect x="457.8" y="360.5" width="2.4" height="2.4" fill="#2fc6ee"/>
<rect x="459.8" y="382.4" width="2.4" height="2.4" fill="#3288ee"/>
<path d="M469.0 349.7 L491.8 323.0" stroke="#32e6b4" stroke-width="3.3600000000000003"/>
<path d="M467.7 307.8 L495.6 319.2" stroke="#2fc6ee" stroke-width="2.688"/>
<path d="M475.3 290.0 L476.6 307.8" stroke="#2fc6ee" stroke-width="2.688"/>
<path d="M486.8 335.7 L498.2 356.0" stroke="#2fc6ee" stroke-width="2.4640000000000004" stroke-dasharray="2.0 0.8"/>
<path d="M480.4 353.5 L491.8 338.3" stroke="#3288ee" stroke-width="2.4640000000000004" stroke-dasharray="2.0 0.8"/>
<path d="M512.2 290.0 C512.4 292.1 511.9 298.7 513.4 302.7 C514.9 306.7 521.6 309.5 521.0 314.1 C520.4 318.8 511.7 326.6 509.6 330.6 C507.5 334.6 508.1 336.2 508.3 338.3 C508.5 340.4 510.5 342.5 510.9 343.3" stroke="#3288ee" stroke-width="2.4640000000000004"/>
<path d="M521.0 314.1 L531.2 331.9" stroke="#3288ee" stroke-width="2.4640000000000004"/>
<path d="M500.7 320.5 L512.2 307.8" stroke="#3288ee" stroke-width="2.4640000000000004" stroke-dasharray="2.0 0.8"/>
<path d="M516.0 338.3 L517.2 348.4 L526.1 352.2 L543.9 353.5 L543.9 357.3" stroke="#2fc6ee" stroke-width="2.4640000000000004" stroke-dasharray="2.2 0.8"/>
<path d="M527.0 262.0 L530.0 245.0" stroke="#32e6b4" stroke-width="2.9120000000000004"/>
<path d="M540.1 300.2 L545.2 347.2" stroke="#2fc6ee" stroke-width="2.688"/>
<path d="M542.6 290.0 L556.6 316.7" stroke="#3288ee" stroke-width="2.4640000000000004" stroke-dasharray="2.0 0.8"/>
<rect x="490.5" y="290.5" width="3" height="3" fill="#d428d8"/>
<rect x="499.5" y="289.5" width="3" height="3" fill="#d428d8"/>
<rect x="495.1" y="287.0" width="3" height="3" fill="#d428d8"/>
<path d="M485.0 300.0 L498.0 293.0" stroke="#32e6b4" stroke-width="2.688"/>
<rect x="488.5" y="311.5" width="3" height="3" fill="#f0a424"/>
<rect x="547.5" y="346.0" width="3" height="3" fill="#f0a424"/>
<path d="M466.0 300.0 L470.0 318.0 L474.0 332.0" stroke="#3aa6f2" stroke-width="2.24" stroke-dasharray="2.0 2.0"/>
<rect x="458.7" y="323.7" width="2.6" height="2.6" fill="#3288ee"/>
<rect x="455.7" y="336.7" width="2.6" height="2.6" fill="#3288ee"/>
<rect x="460.7" y="343.7" width="2.6" height="2.6" fill="#3288ee"/>
<rect x="468.7" y="358.7" width="2.6" height="2.6" fill="#3288ee"/>
<rect x="472.7" y="358.7" width="2.6" height="2.6" fill="#3288ee"/>
<rect x="464.7" y="370.7" width="2.6" height="2.6" fill="#3288ee"/>
<rect x="454.7" y="351.7" width="2.6" height="2.6" fill="#3288ee"/>
<path d="M426.5 285.0 L426.0 311.0 L427.0 333.5 L430.0 349.0" stroke="#3aa6f2" stroke-width="2.4640000000000004" stroke-dasharray="2.2 2.0"/>
<path d="M444.7 285.0 C443.0 286.7 434.9 293.1 434.3 295.4 C433.7 297.7 440.3 296.9 441.2 298.9 C442.1 300.9 438.9 305.2 439.5 307.5 C440.1 309.8 443.0 310.7 444.7 312.7 C446.4 314.7 449.6 317.3 449.9 319.6 C450.2 321.9 448.1 324.3 446.4 326.6 C444.7 328.9 440.6 332.4 439.5 333.5" stroke="#3288ee" stroke-width="2.4640000000000004" stroke-dasharray="2.2 2.0"/>
<path d="M445.5 367.3 L455.9 355.2" stroke="#32e6b4" stroke-width="3.3600000000000003"/>
<rect x="450.7" y="363.7" width="2.6" height="2.6" fill="#3aa6f2"/>
<rect x="456.7" y="370.7" width="2.6" height="2.6" fill="#3aa6f2"/>
<rect x="452.7" y="378.7" width="2.6" height="2.6" fill="#3aa6f2"/>
<rect x="457.7" y="376.7" width="2.6" height="2.6" fill="#3aa6f2"/>
<rect x="444.7" y="380.7" width="2.6" height="2.6" fill="#3aa6f2"/>
<rect x="446.7" y="386.7" width="2.6" height="2.6" fill="#3aa6f2"/>
<path d="M470.7 349.0 L493.2 317.9" stroke="#32e6b4" stroke-width="2.9120000000000004"/>
<path d="M474.1 388.0 L489.7 401.0" stroke="#3aa6f2" stroke-width="2.4640000000000004" stroke-dasharray="2.0 0.8"/>
<path d="M365.0 423.0 L397.0 383.0" stroke="#32e6b4" stroke-width="3.3600000000000003"/>
<rect x="376.7" y="333.1" width="2.6" height="2.6" fill="#3288ee"/>
<rect x="375.7" y="338.7" width="2.6" height="2.6" fill="#3288ee"/>
<rect x="370.7" y="353.7" width="2.6" height="2.6" fill="#3288ee"/>
<rect x="365.7" y="352.7" width="2.6" height="2.6" fill="#3288ee"/>
<rect x="368.2" y="350.7" width="2.6" height="2.6" fill="#3288ee"/>
<rect x="364.7" y="357.7" width="2.6" height="2.6" fill="#3288ee"/>
<rect x="371.0" y="347.0" width="3" height="3" fill="#3ed86a"/>
<path d="M507.0 333.5 L510.5 343.9" stroke="#3288ee" stroke-width="2.4640000000000004"/>
<path d="M515.0 319.6 C513.7 321.9 507.8 329.4 507.0 333.5 C506.2 337.6 509.9 342.2 510.5 343.9" stroke="#2a6fe6" stroke-width="2.4640000000000004"/>
<path d="M384.0 431.6 L406.6 450.6" stroke="#2456e0" stroke-width="2.688" stroke-dasharray="2.2 2.2"/>
<rect x="405.1" y="449.1" width="3" height="3" fill="#2fc6ee"/>
<rect x="372.2" y="402.5" width="2.6" height="2.6" fill="#3288ee"/>
<rect x="379.7" y="391.7" width="2.6" height="2.6" fill="#3288ee"/>
<rect x="390.2" y="394.7" width="2.6" height="2.6" fill="#3288ee"/>
<rect x="385.2" y="407.7" width="2.6" height="2.6" fill="#3288ee"/>
<rect x="379.2" y="415.7" width="2.6" height="2.6" fill="#3288ee"/>
<rect x="373.2" y="423.2" width="2.6" height="2.6" fill="#3288ee"/>
<rect x="385.7" y="424.2" width="2.6" height="2.6" fill="#3288ee"/>
<rect x="365.2" y="432.7" width="2.6" height="2.6" fill="#3288ee"/>
<rect x="364.5" y="448.5" width="3" height="3" fill="#b4dc2a"/>
<rect x="578.1" y="404.2" width="2.6" height="2.6" fill="#2fc6ee"/>
<rect x="582.6" y="412.0" width="2.6" height="2.6" fill="#2fc6ee"/>
<rect x="593.7" y="416.2" width="2.6" height="2.6" fill="#2fc6ee"/>
<rect x="578.5" y="411.2" width="2.6" height="2.6" fill="#3ed86a"/>
<rect x="597.6" y="417.1" width="2.8" height="2.8" fill="#2a2ab8"/>
<rect x="599.0" y="425.4" width="2.6" height="2.6" fill="#2fc6ee"/>
<rect x="603.1" y="426.7" width="2.6" height="2.6" fill="#2fc6ee"/>
<rect x="607.2" y="428.0" width="2.6" height="2.6" fill="#2fc6ee"/>
<rect x="611.2" y="429.2" width="2.6" height="2.6" fill="#2fc6ee"/>
<rect x="615.4" y="430.1" width="2.6" height="2.6" fill="#2fc6ee"/>
<rect x="619.7" y="430.7" width="2.6" height="2.6" fill="#2fc6ee"/>
<rect x="551.2" y="469.2" width="2.6" height="2.6" fill="#32e6b4"/>
<rect x="556.2" y="471.7" width="2.6" height="2.6" fill="#32e6b4"/>
<rect x="572.0" y="492.2" width="2.6" height="2.6" fill="#3aa6f2"/>
<rect x="577.2" y="494.2" width="2.6" height="2.6" fill="#3aa6f2"/>
<rect x="583.1" y="496.1" width="2.8" height="2.8" fill="#b4dc2a"/>
<rect x="648.8" y="482.3" width="2.4" height="2.4" fill="#2fc6ee"/>
<rect x="645.7" y="500.2" width="2.6" height="2.6" fill="#32e6b4"/>
<rect x="559.7" y="514.2" width="2.6" height="2.6" fill="#2fc6ee"/>
<rect x="569.7" y="519.7" width="2.6" height="2.6" fill="#2fc6ee"/>
<rect x="564.7" y="517.2" width="2.6" height="2.6" fill="#3ed86a"/>
<rect x="573.7" y="526.7" width="2.6" height="2.6" fill="#2a6fe6"/>
<rect x="589.7" y="536.7" width="2.6" height="2.6" fill="#2a6fe6"/>
<rect x="578.7" y="531.7" width="2.6" height="2.6" fill="#2a2ab8"/>
<rect x="595.7" y="540.7" width="2.6" height="2.6" fill="#2a2ab8"/>
<rect x="583.6" y="535.6" width="2.8" height="2.8" fill="#5a24d2"/>
<rect x="607.8" y="539.3" width="2.4" height="2.4" fill="#3aa6f2"/>
<rect x="528.2" y="526.2" width="2.6" height="2.6" fill="#3aa6f2"/>
<rect x="533.2" y="530.2" width="2.6" height="2.6" fill="#3aa6f2"/>
<rect x="539.2" y="533.2" width="2.6" height="2.6" fill="#3aa6f2"/>
<rect x="545.2" y="536.2" width="2.6" height="2.6" fill="#3aa6f2"/>
<rect x="551.2" y="539.7" width="2.6" height="2.6" fill="#3aa6f2"/>
<rect x="557.2" y="542.2" width="2.6" height="2.6" fill="#3aa6f2"/>
<rect x="563.2" y="547.2" width="2.6" height="2.6" fill="#3ed86a"/></g>
</svg>
<div style="position:absolute;left:850px;top:62px;width:15px;height:504px;background:#dcdcdc;border-radius:3px"></div>
<div style="position:absolute;left:865px;top:62px;width:1px;height:504px;background:#b5b5b5;"></div>
<svg style="position:absolute;left:854px;top:309px" width="7" height="10"><path d="M1 4.5L5 1v8z" fill="#555"/></svg>
<div style="position:absolute;left:1px;top:572px;width:865px;height:22px;background:#b9b9b9;"></div>
<svg style="position:absolute;left:4px;top:575px" width="18" height="18"><circle cx="8.8" cy="8.8" r="6.8" fill="#fff" stroke="#6f6f6f" stroke-width="1.6"/><path d="M8.3 4.6v4.6h3.8" fill="none" stroke="#111" stroke-width="1.3"/></svg>
<div style="position:absolute;left:27.20px;top:576.10px;font-size:15px;line-height:15px;color:#1e1e1e;white-space:pre;letter-spacing:-0.233px;font-weight:normal;-webkit-text-stroke:0.25px #1e1e1e;">Time</div>
<div style="position:absolute;left:847px;top:574px;width:14px;height:14px;background:#f7f7f7;border:1px solid #8d8d8d;border-radius:3px"></div>
<svg style="position:absolute;left:847px;top:574px" width="16" height="16"><circle cx="8" cy="8" r="5" fill="#d0172f"/><path d="M6.3 6.3l3.4 3.4M9.7 6.3l-3.4 3.4" stroke="#fff" stroke-width="1.3"/></svg>
<div style="position:absolute;left:11.60px;top:607.10px;font-size:15px;line-height:15px;color:#1e1e1e;white-space:pre;letter-spacing:-0.400px;font-weight:normal;-webkit-text-stroke:0.25px #1e1e1e;">ROS Time:</div>
<div style="position:absolute;left:148.90px;top:607.10px;font-size:15px;line-height:15px;color:#1e1e1e;white-space:pre;letter-spacing:-0.491px;font-weight:normal;-webkit-text-stroke:0.25px #1e1e1e;">ROS Elapsed:</div>
<div style="position:absolute;left:345.20px;top:607.10px;font-size:15px;line-height:15px;color:#1e1e1e;white-space:pre;letter-spacing:0.122px;font-weight:normal;-webkit-text-stroke:0.25px #1e1e1e;">Wall Time:</div>
<div style="position:absolute;left:523.90px;top:607.10px;font-size:15px;line-height:15px;color:#1e1e1e;white-space:pre;letter-spacing:-0.092px;font-weight:normal;-webkit-text-stroke:0.25px #1e1e1e;">Wall Elapsed:</div>
<div style="position:absolute;left:88px;top:601px;width:53px;height:23px;background:#fff;border:1px solid #b9b9b9;border-radius:2px"></div>
<div style="position:absolute;left:245px;top:601px;width:91px;height:23px;background:#fff;border:1px solid #b9b9b9;border-radius:2px"></div>
<div style="position:absolute;left:422px;top:601px;width:93px;height:23px;background:#fff;border:1px solid #b9b9b9;border-radius:2px"></div>
<div style="position:absolute;left:619px;top:601px;width:92px;height:23px;background:#fff;border:1px solid #b9b9b9;border-radius:2px"></div>
<div style="position:absolute;left:89px;top:602px;width:53px;height:23px;overflow:hidden">
<div style="position:absolute;right:2.2px;top:0;font-size:15px;line-height:23px;color:#1e1e1e;-webkit-text-stroke:0.25px #1e1e1e;white-space:pre;letter-spacing:0.15px">88566770.13</div>
</div>
<div style="position:absolute;left:248.00px;top:607.10px;font-size:15px;line-height:15px;color:#1e1e1e;white-space:pre;letter-spacing:0.080px;font-weight:normal;-webkit-text-stroke:0.25px #1e1e1e;">214.99</div>
<div style="position:absolute;left:423.50px;top:607.10px;font-size:15px;line-height:15px;color:#1e1e1e;white-space:pre;letter-spacing:0.090px;font-weight:normal;-webkit-text-stroke:0.25px #1e1e1e;">88566770.16</div>
<div style="position:absolute;left:621.20px;top:607.10px;font-size:15px;line-height:15px;color:#1e1e1e;white-space:pre;letter-spacing:0.240px;font-weight:normal;-webkit-text-stroke:0.25px #1e1e1e;">214.89</div>
<div style="position:absolute;left:739px;top:607px;width:12px;height:12px;background:#fff;border:1px solid #a8a8a8"></div>
<div style="position:absolute;left:757.70px;top:607.10px;font-size:15px;line-height:15px;color:#1e1e1e;white-space:pre;letter-spacing:0.355px;font-weight:normal;-webkit-text-stroke:0.25px #1e1e1e;">Experimental</div>
<div style="position:absolute;left:800.00px;top:638.00px;font-size:15px;line-height:15px;color:#1e1e1e;white-space:pre;letter-spacing:0.300px;font-weight:normal;-webkit-text-stroke:0.25px #1e1e1e;">31 fps</div>
<div style="position:absolute;left:4px;top:637px;width:50px;height:22px;background:linear-gradient(#fdfdfd,#ececec);border:1px solid #a9a9a9;border-radius:3px"></div>
<div style="position:absolute;left:9.50px;top:642.30px;font-size:15px;line-height:15px;color:#1e1e1e;white-space:pre;letter-spacing:-0.025px;font-weight:normal;-webkit-text-stroke:0.25px #1e1e1e;">Reset</div>
<div style="position:absolute;left:861px;top:652px;width:1px;height:1px;background:#aaa;"></div>
<div style="position:absolute;left:858px;top:655px;width:1px;height:1px;background:#aaa;"></div>
<div style="position:absolute;left:861px;top:655px;width:1px;height:1px;background:#aaa;"></div>
<div style="position:absolute;left:855px;top:658px;width:1px;height:1px;background:#aaa;"></div>
<div style="position:absolute;left:858px;top:658px;width:1px;height:1px;background:#aaa;"></div>
<div style="position:absolute;left:861px;top:658px;width:1px;height:1px;background:#aaa;"></div>
<div style="position:absolute;left:1px;top:663px;width:854px;height:293px;background:#000;overflow:hidden">
<div style="position:absolute;left:0px;top:-7.2px;height:13px;font-family:'Liberation Mono',monospace;font-size:14px;line-height:13px;color:#c0c0c0;white-space:pre;transform:scaleX(0.7143);transform-origin:0 0">e count: 0</div>
<div style="position:absolute;left:0px;top:5.8px;height:13px;font-family:'Liberation Mono',monospace;font-size:14px;line-height:13px;color:#c0c0c0;white-space:pre;transform:scaleX(0.7143);transform-origin:0 0">[ INFO] [1688566768.593627529]: MsgPackExporter: 76700 udp messages received, 76700 messages exported, 0% package lost.</div>
<div style="position:absolute;left:0px;top:18.8px;height:13px;font-family:'Liberation Mono',monospace;font-size:14px;line-height:13px;color:#c0c0c0;white-space:pre;transform:scaleX(0.7143);transform-origin:0 0">[ INFO] [1688566768.593742785]: MsgPackExporter: max. 5 udp messages buffered, max 4 export messages buffered.</div>
<div style="position:absolute;left:0px;top:31.8px;height:13px;font-family:'Liberation Mono',monospace;font-size:14px;line-height:13px;color:#c0c0c0;white-space:pre;transform:scaleX(0.7143);transform-origin:0 0">[ INFO] [1688566768.593895171]: MsgPackExporter: 76700 msgpacks exported at 240.073 Hz, mean time: 2.72141 milliseconds/msgpack, stddev time:</div>
<div style="position:absolute;left:0px;top:44.8px;height:13px;font-family:'Liberation Mono',monospace;font-size:14px;line-height:13px;color:#c0c0c0;white-space:pre;transform:scaleX(0.7143);transform-origin:0 0">1.14639, max time: 12.2911 milliseconds between udp receive and msgpack export, histogram=[0,6038,59523,3167,1250,3555,2614,340,137,56,20]</div>
<div style="position:absolute;left:0px;top:57.8px;height:13px;font-family:'Liberation Mono',monospace;font-size:14px;line-height:13px;color:#c0c0c0;white-space:pre;transform:scaleX(0.7143);transform-origin:0 0">[ INFO] [1688566769.011892498]: MsgPackExporter:   0 udp packages still in input fifo, 0 messages still in msgpack output fifo, current messag</div>
<div style="position:absolute;left:0px;top:70.8px;height:13px;font-family:'Liberation Mono',monospace;font-size:14px;line-height:13px;color:#c0c0c0;white-space:pre;transform:scaleX(0.7143);transform-origin:0 0">e count: 0</div>
<div style="position:absolute;left:0px;top:83.8px;height:13px;font-family:'Liberation Mono',monospace;font-size:14px;line-height:13px;color:#c0c0c0;white-space:pre;transform:scaleX(0.7143);transform-origin:0 0">[ INFO] [1688566769.012108494]: MsgPackExporter: 76800 udp messages received, 76800 messages exported, 0% package lost.</div>
<div style="position:absolute;left:0px;top:96.8px;height:13px;font-family:'Liberation Mono',monospace;font-size:14px;line-height:13px;color:#c0c0c0;white-space:pre;transform:scaleX(0.7143);transform-origin:0 0">[ INFO] [1688566769.012200492]: MsgPackExporter: max. 5 udp messages buffered, max 4 export messages buffered.</div>
<div style="position:absolute;left:0px;top:109.8px;height:13px;font-family:'Liberation Mono',monospace;font-size:14px;line-height:13px;color:#c0c0c0;white-space:pre;transform:scaleX(0.7143);transform-origin:0 0">[ INFO] [1688566769.012316878]: MsgPackExporter: 76800 msgpacks exported at 240.072 Hz, mean time: 2.72151 milliseconds/msgpack, stddev time:</div>
<div style="position:absolute;left:0px;top:122.8px;height:13px;font-family:'Liberation Mono',monospace;font-size:14px;line-height:13px;color:#c0c0c0;white-space:pre;transform:scaleX(0.7143);transform-origin:0 0">1.14642, max time: 12.2911 milliseconds between udp receive and msgpack export, histogram=[0,6046,59596,3173,1254,3562,2615,340,138,56,20]</div>
<div style="position:absolute;left:0px;top:135.8px;height:13px;font-family:'Liberation Mono',monospace;font-size:14px;line-height:13px;color:#c0c0c0;white-space:pre;transform:scaleX(0.7143);transform-origin:0 0">[ INFO] [1688566769.425306054]: MsgPackExporter:   0 udp packages still in input fifo, 0 messages still in msgpack output fifo, current messag</div>
<div style="position:absolute;left:0px;top:148.8px;height:13px;font-family:'Liberation Mono',monospace;font-size:14px;line-height:13px;color:#c0c0c0;white-space:pre;transform:scaleX(0.7143);transform-origin:0 0">e count: 4</div>
<div style="position:absolute;left:0px;top:161.8px;height:13px;font-family:'Liberation Mono',monospace;font-size:14px;line-height:13px;color:#c0c0c0;white-space:pre;transform:scaleX(0.7143);transform-origin:0 0">[ INFO] [1688566769.425499883]: MsgPackExporter: 76900 udp messages received, 76900 messages exported, 0% package lost.</div>
<div style="position:absolute;left:0px;top:174.8px;height:13px;font-family:'Liberation Mono',monospace;font-size:14px;line-height:13px;color:#c0c0c0;white-space:pre;transform:scaleX(0.7143);transform-origin:0 0">[ INFO] [1688566769.425586789]: MsgPackExporter: max. 5 udp messages buffered, max 4 export messages buffered.</div>
<div style="position:absolute;left:0px;top:187.8px;height:13px;font-family:'Liberation Mono',monospace;font-size:14px;line-height:13px;color:#c0c0c0;white-space:pre;transform:scaleX(0.7143);transform-origin:0 0">[ INFO] [1688566769.425708693]: MsgPackExporter: 76900 msgpacks exported at 240.074 Hz, mean time: 2.72147 milliseconds/msgpack, stddev time:</div>
<div style="position:absolute;left:0px;top:200.8px;height:13px;font-family:'Liberation Mono',monospace;font-size:14px;line-height:13px;color:#c0c0c0;white-space:pre;transform:scaleX(0.7143);transform-origin:0 0">1.14618, max time: 12.2911 milliseconds between udp receive and msgpack export, histogram=[0,6052,59675,3179,1255,3569,2616,340,138,56,20]</div>
<div style="position:absolute;left:0px;top:213.8px;height:13px;font-family:'Liberation Mono',monospace;font-size:14px;line-height:13px;color:#c0c0c0;white-space:pre;transform:scaleX(0.7143);transform-origin:0 0">[ INFO] [1688566769.841733637]: MsgPackExporter:   0 udp packages still in input fifo, 0 messages still in msgpack output fifo, current messag</div>
<div style="position:absolute;left:0px;top:226.8px;height:13px;font-family:'Liberation Mono',monospace;font-size:14px;line-height:13px;color:#c0c0c0;white-space:pre;transform:scaleX(0.7143);transform-origin:0 0">e count: 8</div>
<div style="position:absolute;left:0px;top:239.8px;height:13px;font-family:'Liberation Mono',monospace;font-size:14px;line-height:13px;color:#c0c0c0;white-space:pre;transform:scaleX(0.7143);transform-origin:0 0">[ INFO] [1688566769.841933540]: MsgPackExporter: 77000 udp messages received, 77000 messages exported, 0% package lost.</div>
<div style="position:absolute;left:0px;top:252.8px;height:13px;font-family:'Liberation Mono',monospace;font-size:14px;line-height:13px;color:#c0c0c0;white-space:pre;transform:scaleX(0.7143);transform-origin:0 0">[ INFO] [1688566769.842041871]: MsgPackExporter: max. 5 udp messages buffered, max 4 export messages buffered.</div>
<div style="position:absolute;left:0px;top:265.8px;height:13px;font-family:'Liberation Mono',monospace;font-size:14px;line-height:13px;color:#c0c0c0;white-space:pre;transform:scaleX(0.7143);transform-origin:0 0">[ INFO] [1688566769.842172609]: MsgPackExporter: 77000 msgpacks exported at 240.074 Hz, mean time: 2.72141 milliseconds/msgpack, stddev time:</div>
<div style="position:absolute;left:0px;top:278.8px;height:13px;font-family:'Liberation Mono',monospace;font-size:14px;line-height:13px;color:#c0c0c0;white-space:pre;transform:scaleX(0.7143);transform-origin:0 0">1.146, max time: 12.2911 milliseconds between udp receive and msgpack export, histogram=[0,6058,59755,3182,1257,3577,2617,340,138,56,20]</div>
<div style="position:absolute;left:0px;top:291.8px;height:13px;font-family:'Liberation Mono',monospace;font-size:14px;line-height:13px;color:#c0c0c0;white-space:pre;transform:scaleX(0.7143);transform-origin:0 0"></div>
</div>
<div style="position:absolute;left:855px;top:663px;width:11px;height:293px;background:#efefef;"></div>
<svg style="position:absolute;left:1px;top:953px" width="10" height="4"><rect x="1.5" y="1" width="6" height="4" fill="none" stroke="#3ad03a" stroke-width="1.2"/></svg>
<div style="position:absolute;left:858px;top:925px;width:5px;height:31px;background:#cfcfcf;border-radius:3px"></div>
</body></html>
